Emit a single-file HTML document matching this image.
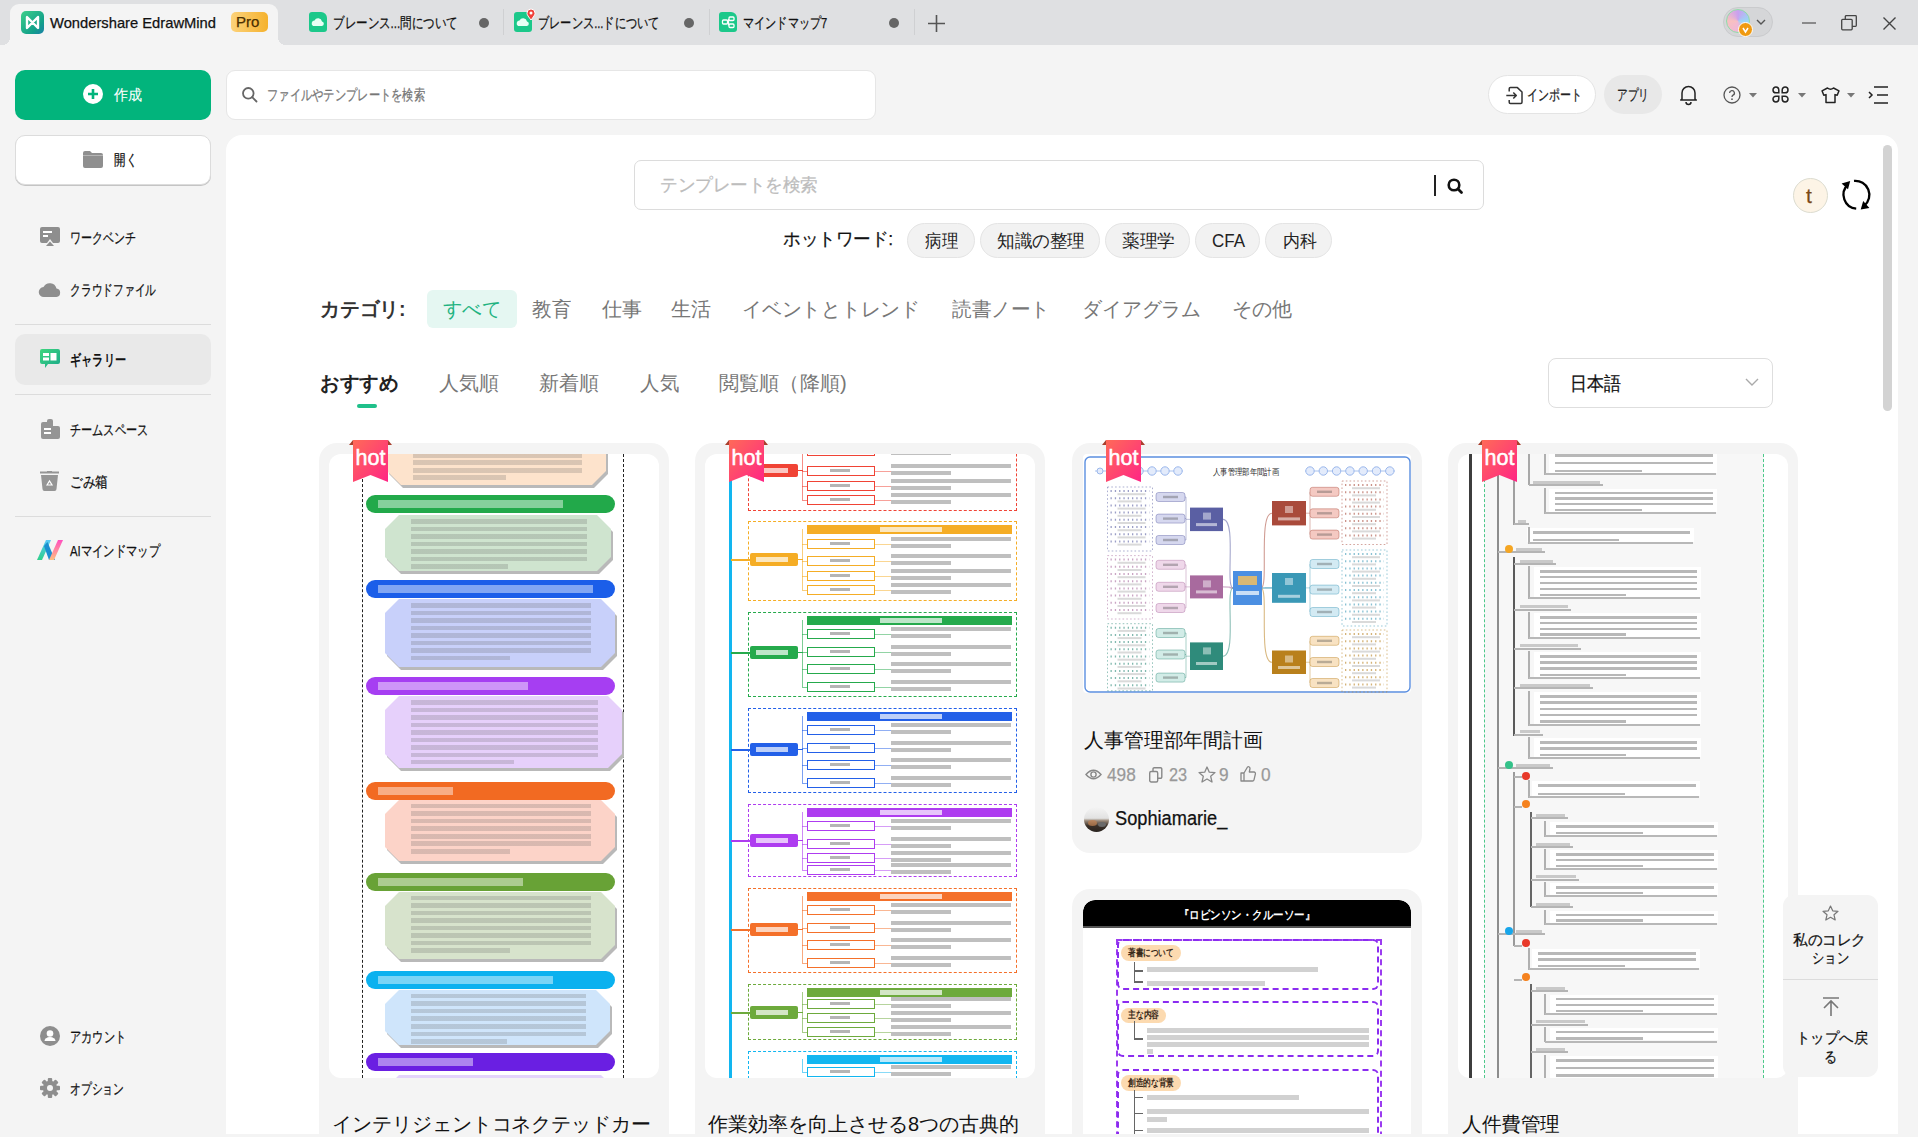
<!DOCTYPE html>
<html><head><meta charset="utf-8">
<style>
*{box-sizing:border-box;margin:0;padding:0}
html,body{width:1918px;height:1137px;overflow:hidden}
body{position:relative;background:#f4f4f4;font-family:"Liberation Sans",sans-serif;color:#1f1f1f}
.a{position:absolute}
.t{position:absolute;white-space:nowrap;line-height:1;-webkit-text-stroke:0.25px currentColor}
svg{position:absolute;overflow:visible}
#titlebar{left:0;top:0;width:1918px;height:45px;background:#dfe0e2}
.tabtxt{font-size:15px;color:#111}
.dot{width:10px;height:10px;border-radius:50%;background:#666}
.sep{width:1px;height:26px;top:9px;background:#cfd0d2}
.nav{left:70px;font-size:15px;color:#111}
.divd{left:15px;width:196px;height:1px;background:#dcdcdc}
#panel{left:226px;top:135px;width:1672px;height:999px;background:#fff;border-radius:16px 16px 0 0}
.chip{top:223px;height:35px;border-radius:18px;background:#f2f2f2;border:1px solid #e4e4e4;font-size:18px;color:#222;line-height:33px;text-align:center}
.cat{top:299px;font-size:20px;color:#777;-webkit-text-stroke:0}
.sort{top:373px;font-size:20px;color:#777;-webkit-text-stroke:0}
.card{background:#f4f4f4;border-radius:18px}
.img{background:#fff;border-radius:12px;overflow:hidden}
.ctitle{font-size:20px;color:#111;-webkit-text-stroke:0}
.t[style*="bold"],.t[style*="font-size:18px"],.t[style*="font-size:19px"],.t[style*="font-size:20px"],.chip .t{-webkit-text-stroke:0}
</style></head>
<body>
<div id="titlebar" class="a"></div>
<!-- active tab -->
<div class="a" style="left:10px;top:4px;width:268px;height:41px;background:#f4f4f4;border-radius:9px 9px 0 0"></div>
<div class="a" style="left:2px;top:37px;width:8px;height:8px;background:radial-gradient(circle at 0 0,#dfe0e2 8px,#f4f4f4 8px)"></div>
<div class="a" style="left:278px;top:37px;width:8px;height:8px;background:radial-gradient(circle at 100% 0,#dfe0e2 8px,#f4f4f4 8px)"></div>
<!-- logo -->
<div class="a" style="left:21px;top:11px;width:23px;height:23px;border-radius:5px;background:linear-gradient(135deg,#3fd08a,#12a08a 70%,#1a7fa8)"></div>
<svg style="left:21px;top:11px" width="23" height="23" viewBox="0 0 23 23"><path d="M6 6 L6 17 L11.5 11.5 L17 17 L17 6 L11.5 11.5 Z" fill="none" stroke="#fff" stroke-width="2.4" stroke-linejoin="round"></path></svg>
<div class="t tabtxt" style="left: 50px; top: 15px; --w: 166px; transform-origin: 0px 0px; transform: scaleX(0.982249);">Wondershare EdrawMind</div>
<div class="a" style="left:231px;top:12px;width:37px;height:20px;border-radius:5px;background:linear-gradient(90deg,#fcd27a,#f5b22e)"></div>
<div class="t" style="left:236px;top:14px;font-size:15px;color:#4a2e00">Pro</div>

<!-- tab 2 -->
<div class="a" style="left:309px;top:12px;width:18px;height:20px;border-radius:3px 6px 3px 3px;background:#1cc88a"></div>
<svg style="left:309px;top:12px" width="18" height="20"><path d="M4 14 a3 3 0 0 1 1.5-5.5 a4 4 0 0 1 7.5 1 a2.3 2.3 0 0 1 0 4.5z" fill="#e8fff5"></path></svg>
<div class="t tabtxt" style="left: 333px; top: 15px; --w: 125px; transform-origin: 0px 0px; transform: scaleX(0.766871);">ブレーンス...問について</div>
<div class="a dot" style="left:479px;top:18px"></div>
<div class="a sep" style="left:503px"></div>
<!-- tab 3 -->
<div class="a" style="left:514px;top:12px;width:18px;height:20px;border-radius:3px 6px 3px 3px;background:#1cc88a"></div>
<svg style="left:514px;top:12px" width="18" height="20"><path d="M4 14 a3 3 0 0 1 1.5-5.5 a4 4 0 0 1 7.5 1 a2.3 2.3 0 0 1 0 4.5z" fill="#e8fff5"></path></svg>
<svg style="left:526px;top:9px" width="10" height="12"><path d="M5 11 C1 6 1 5 1 4 a4 4 0 0 1 8 0 c0 1 0 2 -4 7z" fill="#f0403a" stroke="#fff" stroke-width="1"></path><circle cx="5" cy="4" r="1.5" fill="#fff"></circle></svg>
<div class="t tabtxt" style="left: 538px; top: 15px; --w: 122px; transform-origin: 0px 0px; transform: scaleX(0.748466);">ブレーンス...ドについて</div>
<div class="a dot" style="left:684px;top:18px"></div>
<div class="a sep" style="left:709px"></div>
<!-- tab 4 -->
<div class="a" style="left:719px;top:12px;width:18px;height:20px;border-radius:3px 6px 3px 3px;background:#1cc88a"></div>
<svg style="left:719px;top:12px" width="18" height="20"><g fill="none" stroke="#fff" stroke-width="1.3"><rect x="3.5" y="8" width="5" height="4" rx="1"></rect><rect x="10" y="5" width="5" height="3.5" rx="1"></rect><rect x="10" y="12" width="5" height="3.5" rx="1"></rect><path d="M8.5 10 H9.5 V7 M9.5 10 V13.5"></path></g></svg>
<div class="t tabtxt" style="left: 743px; top: 15px; --w: 84px; transform-origin: 0px 0px; transform: scaleX(0.743363);">マインドマップ7</div>
<div class="a dot" style="left:889px;top:18px"></div>
<div class="a sep" style="left:914px"></div>
<svg style="left:928px;top:15px" width="17" height="17"><path d="M8.5 0 V17 M0 8.5 H17" stroke="#555" stroke-width="1.6"></path></svg>

<!-- window controls -->
<div class="a" style="left:1723px;top:7px;width:50px;height:30px;border-radius:15px;background:#d5d6d8;border:1px solid #cacbcd"></div>
<div class="a" style="left:1726px;top:9px;width:24px;height:24px;border-radius:50%;background:conic-gradient(#c9a0f0,#9ad6f5,#f0b8d8,#f8c0c0,#c9a0f0);border:1px solid #8fdca8"></div>
<div class="a" style="left:1738px;top:22px;width:15px;height:15px;border-radius:50%;background:#f09a10;border:1.5px solid #fff"></div>
<svg style="left:1741px;top:25px" width="9" height="9"><path d="M2 3 L4.5 7 L7 3" fill="none" stroke="#fff" stroke-width="1.5"></path></svg>
<svg style="left:1756px;top:19px" width="10" height="7"><path d="M1 1 L5 5 L9 1" fill="none" stroke="#555" stroke-width="1.4"></path></svg>
<svg style="left:1802px;top:22px" width="15" height="2"><path d="M0 1 H14" stroke="#444" stroke-width="1.1"></path></svg>
<svg style="left:1841px;top:15px" width="16" height="16"><g fill="none" stroke="#444" stroke-width="1.3"><rect x="0.7" y="4.3" width="10.5" height="10.5" rx="1"></rect><path d="M4.3 4.3 V1.5 a1 1 0 0 1 1-0.8 H14.5 a0.8 0.8 0 0 1 0.8 0.8 V10.5 a0.8 0.8 0 0 1 -0.8 0.8 H11.2"></path></g></svg>
<svg style="left:1883px;top:17px" width="13" height="13"><path d="M0.5 0.5 L12.5 12.5 M12.5 0.5 L0.5 12.5" stroke="#444" stroke-width="1.4"></path></svg>

<!-- sidebar -->
<div class="a" style="left:15px;top:70px;width:196px;height:50px;background:#02b47c;border-radius:10px"></div>
<div class="a" style="left:83px;top:84px;width:20px;height:20px;border-radius:50%;background:#fff"></div>
<svg style="left:83px;top:84px" width="20" height="20"><path d="M10 5 V15 M5 10 H15" stroke="#02b47c" stroke-width="2.6"></path></svg>
<div class="t" style="left: 114px; top: 87px; font-size: 15px; color: rgb(255, 255, 255); --w: 28px; -webkit-text-stroke: 0.1px rgb(255, 255, 255); transform-origin: 0px 0px; transform: scaleX(0.933333);">作成</div>

<div class="a" style="left:15px;top:135px;width:196px;height:50px;background:#fff;border:1px solid #dcdcdc;border-radius:10px;box-shadow:0 1px 0 #c4c4c4"></div>
<svg style="left:83px;top:151px" width="20" height="17"><path d="M0 2 a2 2 0 0 1 2-2 H7 L9 2 H18 a2 2 0 0 1 2 2 V15 a2 2 0 0 1 -2 2 H2 a2 2 0 0 1 -2-2z" fill="#8f8f8f"></path><path d="M0 4.5 H20" stroke="#b5b5b5" stroke-width="1"></path></svg>
<div class="t" style="left: 114px; top: 152px; font-size: 15px; color: rgb(17, 17, 17); --w: 23px; transform-origin: 0px 0px; transform: scaleX(0.766667);">開く</div>

<svg style="left:40px;top:227px" width="20" height="20"><path d="M2 0 H18 a2 2 0 0 1 2 2 V14 a2 2 0 0 1 -2 2 H13 L10 12 L7 16 H2 a2 2 0 0 1 -2-2 V2 a2 2 0 0 1 2-2z" fill="#8e8e8e"></path><path d="M6 19 L10 14.5 L14 19z" fill="#8e8e8e"></path><rect x="3" y="4" width="9" height="2" fill="#fff"></rect><rect x="3" y="8" width="5" height="2" fill="#fff"></rect></svg>
<div class="t nav" style="top: 230px; --w: 66px; transform-origin: 0px 0px; transform: scaleX(0.733333);">ワークベンチ</div>
<svg style="left:39px;top:281px" width="22" height="16"><path d="M5 16 a5 5 0 0 1 -0.5-10 a7 7 0 0 1 13 1.5 a4.3 4.3 0 0 1 0 8.5z" fill="#8e8e8e"></path></svg>
<div class="t nav" style="top: 282px; --w: 86px; transform-origin: 0px 0px; transform: scaleX(0.716667);">クラウドファイル</div>
<div class="a divd" style="top:324px"></div>
<div class="a" style="left:15px;top:334px;width:196px;height:51px;background:#e9e9e9;border-radius:10px"></div>
<svg style="left:40px;top:349px" width="20" height="20"><defs><linearGradient id="gg" x1="0" y1="0" x2="1" y2="1"><stop offset="0" stop-color="#3ed67e"></stop><stop offset="1" stop-color="#1aa88a"></stop></linearGradient></defs><path d="M2 0 H18 a2 2 0 0 1 2 2 V13 a2 2 0 0 1 -2 2 H8 L5 19 V15 H2 a2 2 0 0 1 -2-2 V2 a2 2 0 0 1 2-2z" fill="url(#gg)"></path><rect x="3" y="4" width="6" height="3" fill="#fff"></rect><rect x="3" y="8.5" width="6" height="3" fill="#fff"></rect><rect x="10.5" y="4" width="6" height="7.5" fill="#fff"></rect></svg>
<div class="t nav" style="top: 352px; font-weight: bold; --w: 56px; transform-origin: 0px 0px; transform: scaleX(0.746667);">ギャラリー</div>
<div class="a divd" style="top:394px"></div>
<svg style="left:40px;top:419px" width="20" height="20"><path d="M1 5 a2 2 0 0 1 2-2 H7 V2 a2 2 0 0 1 2-2 H11 a2 2 0 0 1 2 2 V7 H18 a2 2 0 0 1 2 2 V18 a2 2 0 0 1 -2 2 H3 a2 2 0 0 1 -2-2z" fill="#959595"></path><rect x="4" y="9" width="7" height="2" fill="#fff"></rect><rect x="4" y="13" width="7" height="2" fill="#fff"></rect></svg>
<div class="t nav" style="top: 422px; --w: 78px; transform-origin: 0px 0px; transform: scaleX(0.742857);">チームスペース</div>
<svg style="left:40px;top:471px" width="20" height="20"><rect x="0" y="0.5" width="19" height="2" fill="#959595"></rect><rect x="7" y="0" width="5" height="1" fill="#959595"></rect><path d="M1 4 H18 L16.5 18 a2 2 0 0 1 -2 2 H4.5 a2 2 0 0 1 -2-2z" fill="#959595"></path><path d="M7 14 L9.5 10 L12 14z" fill="none" stroke="#fff" stroke-width="1.2"></path></svg>
<div class="t nav" style="top: 474px; --w: 38px; transform-origin: 0px 0px; transform: scaleX(0.844444);">ごみ箱</div>
<div class="a divd" style="top:516px"></div>
<svg style="left:37px;top:540px" width="26" height="20"><defs><linearGradient id="ai1" x1="0" y1="1" x2="0" y2="0"><stop offset="0" stop-color="#2fd08a"></stop><stop offset="1" stop-color="#5ac8f8"></stop></linearGradient><linearGradient id="ai2" x1="0" y1="1" x2="0" y2="0"><stop offset="0" stop-color="#ffc080"></stop><stop offset="1" stop-color="#ff4fc0"></stop></linearGradient></defs><path d="M0 20 L9 0 H14 L5 20z" fill="url(#ai1)"></path><path d="M7 6 L12 20 H18 L10.5 2z" fill="#1b8fd0"></path><path d="M12 20 L21 0 H26 L17 20z" fill="url(#ai2)"></path></svg>
<div class="t nav" style="top: 543px; --w: 90px; transform-origin: 0px 0px; transform: scaleX(0.756303);">AIマインドマップ</div>

<svg style="left:40px;top:1026px" width="20" height="20"><circle cx="10" cy="10" r="10" fill="#8e8e8e"></circle><circle cx="10" cy="7.5" r="3.3" fill="#fff"></circle><path d="M4.5 15 a5.5 4 0 0 1 11 0z" fill="#fff"></path></svg>
<div class="t nav" style="top: 1029px; --w: 56px; transform-origin: 0px 0px; transform: scaleX(0.746667);">アカウント</div>
<svg style="left:40px;top:1078px" width="20" height="20" viewBox="-10 -10 20 20"><g fill="#8e8e8e"><circle r="7.2"></circle><rect x="-2.2" y="-10" width="4.4" height="5" rx="1" transform="rotate(0)"></rect><rect x="-2.2" y="-10" width="4.4" height="5" rx="1" transform="rotate(45)"></rect><rect x="-2.2" y="-10" width="4.4" height="5" rx="1" transform="rotate(90)"></rect><rect x="-2.2" y="-10" width="4.4" height="5" rx="1" transform="rotate(135)"></rect><rect x="-2.2" y="-10" width="4.4" height="5" rx="1" transform="rotate(180)"></rect><rect x="-2.2" y="-10" width="4.4" height="5" rx="1" transform="rotate(225)"></rect><rect x="-2.2" y="-10" width="4.4" height="5" rx="1" transform="rotate(270)"></rect><rect x="-2.2" y="-10" width="4.4" height="5" rx="1" transform="rotate(315)"></rect></g><circle r="3" fill="#f4f4f4"></circle></svg>
<div class="t nav" style="top: 1081px; --w: 54px; transform-origin: 0px 0px; transform: scaleX(0.72);">オプション</div>

<!-- top search -->
<div class="a" style="left:226px;top:70px;width:650px;height:50px;background:#fff;border:1px solid #e6e6e6;border-radius:9px"></div>
<svg style="left:242px;top:87px" width="16" height="16"><circle cx="6.3" cy="6.3" r="5.3" fill="none" stroke="#666" stroke-width="1.8"></circle><path d="M10.2 10.2 L14.5 14.5" stroke="#666" stroke-width="1.8" stroke-linecap="round"></path></svg>
<div class="t" style="left: 267px; top: 87px; font-size: 15px; color: rgb(119, 119, 119); --w: 158px; transform-origin: 0px 0px; transform: scaleX(0.752381);">ファイルやテンプレートを検索</div>

<!-- right toolbar -->
<div class="a" style="left:1488px;top:75px;width:108px;height:39px;border-radius:20px;background:#fff;border:1px solid #e4e4e4"></div>
<svg style="left:1506px;top:87px" width="17" height="17"><g fill="none" stroke="#333" stroke-width="1.5" stroke-linejoin="round"><path d="M3.2 4.4 V1.8 a1.2 1.2 0 0 1 1.2-1.2 H11.4 L16 5 V15.3 a1.2 1.2 0 0 1 -1.2 1.2 H4.4 a1.2 1.2 0 0 1 -1.2-1.2 V12.9"></path><path d="M0.3 8.5 H10.3 M7.3 5.5 L10.3 8.5 L7.3 11.5"></path></g></svg>
<div class="t" style="left: 1527px; top: 87px; font-size: 15px; color: rgb(34, 34, 34); --w: 55px; transform-origin: 0px 0px; transform: scaleX(0.733333);">インポート</div>
<div class="a" style="left:1604px;top:75px;width:58px;height:39px;border-radius:20px;background:#e8e8e8"></div>
<div class="t" style="left: 1617px; top: 87px; font-size: 15px; color: rgb(34, 34, 34); --w: 32px; transform-origin: 0px 0px; transform: scaleX(0.711111);">アプリ</div>
<svg style="left:1680px;top:85px" width="17" height="19"><g fill="none" stroke="#222" stroke-width="1.5"><path d="M2 14 V8 a6.5 6.5 0 0 1 13 0 V14 L16.3 15 H0.7z" stroke-linejoin="round"></path><path d="M6 17 a2.5 2.5 0 0 0 5 0"></path></g></svg>
<svg style="left:1723px;top:86px" width="18" height="18"><circle cx="9" cy="9" r="8" fill="none" stroke="#555" stroke-width="1.3"></circle><path d="M6.6 7 a2.4 2.4 0 1 1 3.4 2.2 c-0.8 0.4 -1 0.9 -1 1.8" fill="none" stroke="#555" stroke-width="1.3"></path><circle cx="9" cy="13.2" r="0.85" fill="#555"></circle></svg>
<svg style="left:1749px;top:93px" width="8" height="5"><path d="M0 0 H8 L4 4.5z" fill="#777"></path></svg>
<svg style="left:1772px;top:86px" width="17" height="17"><g fill="none" stroke="#222" stroke-width="1.5"><path d="M6.8 6.8 H3.9 a2.9 2.9 0 1 1 2.9-2.9z"></path><path d="M10.2 6.8 H13.1 a2.9 2.9 0 1 0 -2.9-2.9z"></path><path d="M6.8 10.2 H3.9 a2.9 2.9 0 1 0 2.9 2.9z"></path><path d="M10.2 10.2 H13.1 a2.9 2.9 0 1 1 -2.9 2.9z"></path></g></svg>
<svg style="left:1798px;top:93px" width="8" height="5"><path d="M0 0 H8 L4 4.5z" fill="#777"></path></svg>
<svg style="left:1821px;top:87px" width="19" height="17"><path d="M6.5 1 Q9.5 3.5 12.5 1 L18 3.8 L16.2 8.3 L14 7.6 V15.5 H5 V7.6 L2.8 8.3 L1 3.8z" fill="none" stroke="#222" stroke-width="1.5" stroke-linejoin="round"></path></svg>
<svg style="left:1847px;top:93px" width="8" height="5"><path d="M0 0 H8 L4 4.5z" fill="#777"></path></svg>
<svg style="left:1868px;top:86px" width="21" height="18"><g fill="none" stroke="#222" stroke-width="1.5"><path d="M6 1 H20 M9 9 H20 M6 17 H20"></path><path d="M1 6 L4 9 L1 12"></path></g></svg>

<div id="panel" class="a"></div>

<!-- panel header -->
<div class="a" style="left:634px;top:160px;width:850px;height:50px;border:1px solid #dcdcdc;border-radius:7px;background:#fff"></div>
<div class="t" style="left: 660px; top: 176px; font-size: 18px; color: rgb(189, 189, 189); --w: 158px; transform-origin: 0px 0px; transform: scaleX(0.975309);">テンプレートを検索</div>
<div class="a" style="left:1434px;top:175px;width:2px;height:21px;background:#222"></div>
<svg style="left:1447px;top:178px" width="17" height="16"><circle cx="7" cy="7" r="5.3" fill="none" stroke="#111" stroke-width="2.6"></circle><path d="M11 11 L14.5 14.5" stroke="#111" stroke-width="2.8" stroke-linecap="round"></path></svg>
<div class="t" style="left: 783px; top: 230px; font-size: 18px; color: rgb(17, 17, 17); --w: 110px; transform-origin: 0px 0px; transform: scaleX(0.973451);">ホットワード:</div>
<div class="a chip" style="left:907px;width:68px"><span class="t" style="left: 17px; top: 8px; --w: 33px; transform-origin: 0px 0px; transform: scaleX(0.916667);">病理</span></div>
<div class="a chip" style="left:980px;width:120px"><span class="t" style="left: 16px; top: 8px; --w: 88px; transform-origin: 0px 0px; transform: scaleX(0.977778);">知識の整理</span></div>
<div class="a chip" style="left:1105px;width:85px"><span class="t" style="left: 16px; top: 8px; --w: 53px; transform-origin: 0px 0px; transform: scaleX(0.981481);">薬理学</span></div>
<div class="a chip" style="left:1195px;width:65px"><span class="t" style="left: 16px; top: 8px; --w: 33px; transform-origin: 0px 0px; transform: scaleX(0.942857);">CFA</span></div>
<div class="a chip" style="left:1265px;width:67px"><span class="t" style="left: 17px; top: 8px; --w: 34px; transform-origin: 0px 0px; transform: scaleX(0.944444);">内科</span></div>

<div class="a" style="left:1793px;top:178px;width:35px;height:35px;border-radius:50%;background:#fdf4e6;border:1px solid #dcdcd0"></div>
<div class="t" style="left:1806px;top:185px;font-size:21px;color:#7a4816">t</div>
<svg style="left:1841px;top:180px" width="30" height="30"><g fill="none" stroke="#000" stroke-width="2.3"><path d="M6.8 4.6 A14 14 0 0 0 15.2 28.6"></path><path d="M13 0.9 A14 14 0 0 1 23.3 25.6"></path></g><path d="M0.6 3.5 L9.2 0.9 L7 9.3z M19.7 29.4 L28.4 27.9 L22.2 21z" fill="#000"></path></svg>

<div class="t" style="left: 320px; top: 299px; font-size: 20px; color: rgb(51, 51, 51); font-weight: bold; --w: 86px; transform-origin: 0px 0px; transform: scaleX(0.988506);">カテゴリ:</div>
<div class="a" style="left:427px;top:290px;width:90px;height:38px;border-radius:6px;background:#e5f7f2"></div>
<div class="t cat" style="left: 443px; color: rgb(31, 179, 129); --w: 58px; transform-origin: 0px 0px; transform: scaleX(0.966667);">すべて</div>
<div class="t cat" style="left: 532px; --w: 39px; transform-origin: 0px 0px; transform: scaleX(0.975);">教育</div>
<div class="t cat" style="left: 602px; --w: 40px; transform-origin: 0px 0px; transform: scaleX(1);">仕事</div>
<div class="t cat" style="left: 671px; --w: 40px; transform-origin: 0px 0px; transform: scaleX(1);">生活</div>
<div class="t cat" style="left: 742px; --w: 178px; transform-origin: 0px 0px; transform: scaleX(0.988889);">イベントとトレンド</div>
<div class="t cat" style="left: 952px; --w: 98px; transform-origin: 0px 0px; transform: scaleX(0.98);">読書ノート</div>
<div class="t cat" style="left: 1082px; --w: 119px; transform-origin: 0px 0px; transform: scaleX(0.991667);">ダイアグラム</div>
<div class="t cat" style="left: 1232px; --w: 60px; transform-origin: 0px 0px; transform: scaleX(1);">その他</div>

<div class="t sort" style="left: 320px; color: rgb(34, 34, 34); font-weight: bold; --w: 78px; transform-origin: 0px 0px; transform: scaleX(0.975);">おすすめ</div>
<div class="a" style="left:357px;top:404px;width:20px;height:4px;border-radius:2px;background:#1fc08a"></div>
<div class="t sort" style="left: 439px; --w: 60px; transform-origin: 0px 0px; transform: scaleX(1);">人気順</div>
<div class="t sort" style="left: 539px; --w: 60px; transform-origin: 0px 0px; transform: scaleX(1);">新着順</div>
<div class="t sort" style="left: 640px; --w: 39px; transform-origin: 0px 0px; transform: scaleX(0.975);">人気</div>
<div class="t sort" style="left: 719px; --w: 128px; transform-origin: 0px 0px; transform: scaleX(1.00787);">閲覧順（降順)</div>

<div class="a" style="left:1548px;top:358px;width:225px;height:50px;border:1px solid #dedede;border-radius:8px;background:#fff"></div>
<div class="t" style="left: 1570px; top: 374px; font-size: 19px; color: rgb(17, 17, 17); --w: 51px; transform-origin: 0px 0px; transform: scaleX(0.894737);">日本語</div>
<svg style="left:1745px;top:378px" width="14" height="9"><path d="M1 1 L7 7 L13 1" fill="none" stroke="#aaa" stroke-width="1.4"></path></svg>

<!--CARDS-->
<div class="a card" style="left:319px;top:443px;width:350px;height:717px"></div>
<div class="a img" style="left:329px;top:454px;width:330px;height:624px"><div class="a" style="left:33px;top:0;width:0;height:624px;border-left:1px dashed #222"></div><div class="a" style="left:294px;top:0;width:0;height:624px;border-left:1px dashed #222"></div><div class="a" style="left:60px;top:-17px;width:219px;height:51px;background:#b9b9b9;clip-path:polygon(14px 0,calc(100% - 14px) 0,100% 14px,100% calc(100% - 14px),calc(100% - 14px) 100%,14px 100%,0 calc(100% - 14px),0 14px)"></div><div class="a" style="left:58px;top:-20px;width:219px;height:51px;background:#fde3cc;clip-path:polygon(14px 0,calc(100% - 14px) 0,100% 14px,100% calc(100% - 14px),calc(100% - 14px) 100%,14px 100%,0 calc(100% - 14px),0 14px);--bgc:#fde3cc"><div class="a" style="left:26px;top:4px;width:169px;height:42.0px;background:repeating-linear-gradient(180deg,rgba(90,90,90,.22) 0 4.5px,transparent 4.5px 7.5px)"></div><div class="a" style="left:119.0px;top:41.0px;width:77.0px;height:5.5px;background:var(--bgc)"></div></div><div class="a" style="left:37px;top:41px;width:249px;height:18px;border-radius:9px;background:#22a94a"></div><div class="a" style="left:49px;top:46px;width:185px;height:8px;background:rgba(255,255,255,.45)"></div><div class="a" style="left:58px;top:64px;width:226px;height:56px;background:#b9b9b9;clip-path:polygon(14px 0,calc(100% - 14px) 0,100% 14px,100% calc(100% - 14px),calc(100% - 14px) 100%,14px 100%,0 calc(100% - 14px),0 14px)"></div><div class="a" style="left:56px;top:61px;width:226px;height:56px;background:#cfe4cf;clip-path:polygon(14px 0,calc(100% - 14px) 0,100% 14px,100% calc(100% - 14px),calc(100% - 14px) 100%,14px 100%,0 calc(100% - 14px),0 14px);--bgc:#cfe4cf"><div class="a" style="left:26px;top:4px;width:176px;height:49.5px;background:repeating-linear-gradient(180deg,rgba(90,90,90,.22) 0 4.5px,transparent 4.5px 7.5px)"></div><div class="a" style="left:122.8px;top:48.5px;width:80.2px;height:5.5px;background:var(--bgc)"></div></div><div class="a" style="left:37px;top:126px;width:249px;height:18px;border-radius:9px;background:#1b5ee9"></div><div class="a" style="left:49px;top:131px;width:215px;height:8px;background:rgba(255,255,255,.45)"></div><div class="a" style="left:58px;top:148px;width:230px;height:68px;background:#b9b9b9;clip-path:polygon(14px 0,calc(100% - 14px) 0,100% 14px,100% calc(100% - 14px),calc(100% - 14px) 100%,14px 100%,0 calc(100% - 14px),0 14px)"></div><div class="a" style="left:56px;top:145px;width:230px;height:68px;background:#c8d0fa;clip-path:polygon(14px 0,calc(100% - 14px) 0,100% 14px,100% calc(100% - 14px),calc(100% - 14px) 100%,14px 100%,0 calc(100% - 14px),0 14px);--bgc:#c8d0fa"><div class="a" style="left:26px;top:4px;width:180px;height:57.0px;background:repeating-linear-gradient(180deg,rgba(90,90,90,.22) 0 4.5px,transparent 4.5px 7.5px)"></div><div class="a" style="left:125.0px;top:56.0px;width:82.0px;height:5.5px;background:var(--bgc)"></div></div><div class="a" style="left:37px;top:223px;width:249px;height:18px;border-radius:9px;background:#a63ef2"></div><div class="a" style="left:49px;top:228px;width:150px;height:8px;background:rgba(255,255,255,.45)"></div><div class="a" style="left:58px;top:245px;width:237px;height:72px;background:#b9b9b9;clip-path:polygon(14px 0,calc(100% - 14px) 0,100% 14px,100% calc(100% - 14px),calc(100% - 14px) 100%,14px 100%,0 calc(100% - 14px),0 14px)"></div><div class="a" style="left:56px;top:242px;width:237px;height:72px;background:#e6d0fb;clip-path:polygon(14px 0,calc(100% - 14px) 0,100% 14px,100% calc(100% - 14px),calc(100% - 14px) 100%,14px 100%,0 calc(100% - 14px),0 14px);--bgc:#e6d0fb"><div class="a" style="left:26px;top:4px;width:187px;height:64.5px;background:repeating-linear-gradient(180deg,rgba(90,90,90,.22) 0 4.5px,transparent 4.5px 7.5px)"></div><div class="a" style="left:128.9px;top:63.5px;width:85.1px;height:5.5px;background:var(--bgc)"></div></div><div class="a" style="left:37px;top:328px;width:249px;height:18px;border-radius:9px;background:#f26a22"></div><div class="a" style="left:49px;top:333px;width:75px;height:8px;background:rgba(255,255,255,.45)"></div><div class="a" style="left:58px;top:349px;width:230px;height:61px;background:#b9b9b9;clip-path:polygon(14px 0,calc(100% - 14px) 0,100% 14px,100% calc(100% - 14px),calc(100% - 14px) 100%,14px 100%,0 calc(100% - 14px),0 14px)"></div><div class="a" style="left:56px;top:346px;width:230px;height:61px;background:#fcd3c8;clip-path:polygon(14px 0,calc(100% - 14px) 0,100% 14px,100% calc(100% - 14px),calc(100% - 14px) 100%,14px 100%,0 calc(100% - 14px),0 14px);--bgc:#fcd3c8"><div class="a" style="left:26px;top:4px;width:180px;height:49.5px;background:repeating-linear-gradient(180deg,rgba(90,90,90,.22) 0 4.5px,transparent 4.5px 7.5px)"></div><div class="a" style="left:125.0px;top:48.5px;width:82.0px;height:5.5px;background:var(--bgc)"></div></div><div class="a" style="left:37px;top:419px;width:249px;height:18px;border-radius:9px;background:#68a236"></div><div class="a" style="left:49px;top:424px;width:145px;height:8px;background:rgba(255,255,255,.45)"></div><div class="a" style="left:58px;top:441px;width:230px;height:67px;background:#b9b9b9;clip-path:polygon(14px 0,calc(100% - 14px) 0,100% 14px,100% calc(100% - 14px),calc(100% - 14px) 100%,14px 100%,0 calc(100% - 14px),0 14px)"></div><div class="a" style="left:56px;top:438px;width:230px;height:67px;background:#d7e3cc;clip-path:polygon(14px 0,calc(100% - 14px) 0,100% 14px,100% calc(100% - 14px),calc(100% - 14px) 100%,14px 100%,0 calc(100% - 14px),0 14px);--bgc:#d7e3cc"><div class="a" style="left:26px;top:4px;width:180px;height:57.0px;background:repeating-linear-gradient(180deg,rgba(90,90,90,.22) 0 4.5px,transparent 4.5px 7.5px)"></div><div class="a" style="left:125.0px;top:56.0px;width:82.0px;height:5.5px;background:var(--bgc)"></div></div><div class="a" style="left:37px;top:517px;width:249px;height:18px;border-radius:9px;background:#0bb1ef"></div><div class="a" style="left:49px;top:522px;width:175px;height:8px;background:rgba(255,255,255,.45)"></div><div class="a" style="left:58px;top:539px;width:225px;height:55px;background:#b9b9b9;clip-path:polygon(14px 0,calc(100% - 14px) 0,100% 14px,100% calc(100% - 14px),calc(100% - 14px) 100%,14px 100%,0 calc(100% - 14px),0 14px)"></div><div class="a" style="left:56px;top:536px;width:225px;height:55px;background:#cfe5fb;clip-path:polygon(14px 0,calc(100% - 14px) 0,100% 14px,100% calc(100% - 14px),calc(100% - 14px) 100%,14px 100%,0 calc(100% - 14px),0 14px);--bgc:#cfe5fb"><div class="a" style="left:26px;top:4px;width:175px;height:49.5px;background:repeating-linear-gradient(180deg,rgba(90,90,90,.22) 0 4.5px,transparent 4.5px 7.5px)"></div><div class="a" style="left:122.3px;top:48.5px;width:79.7px;height:5.5px;background:var(--bgc)"></div></div><div class="a" style="left:37px;top:599px;width:249px;height:18px;border-radius:9px;background:#6a1fe2"></div><div class="a" style="left:49px;top:604px;width:95px;height:8px;background:rgba(255,255,255,.45)"></div><div class="a" style="left:58px;top:624px;width:230px;height:60px;background:#b9b9b9;clip-path:polygon(14px 0,calc(100% - 14px) 0,100% 14px,100% calc(100% - 14px),calc(100% - 14px) 100%,14px 100%,0 calc(100% - 14px),0 14px)"></div><div class="a" style="left:56px;top:621px;width:230px;height:60px;background:#e3d3fb;clip-path:polygon(14px 0,calc(100% - 14px) 0,100% 14px,100% calc(100% - 14px),calc(100% - 14px) 100%,14px 100%,0 calc(100% - 14px),0 14px);--bgc:#e3d3fb"><div class="a" style="left:26px;top:4px;width:180px;height:49.5px;background:repeating-linear-gradient(180deg,rgba(90,90,90,.22) 0 4.5px,transparent 4.5px 7.5px)"></div><div class="a" style="left:125.0px;top:48.5px;width:82.0px;height:5.5px;background:var(--bgc)"></div></div></div>
<div class="t ctitle" style="left: 332px; top: 1114px; --w: 319px; transform-origin: 0px 0px; transform: scaleX(0.996875);">インテリジェントコネクテッドカー</div>
<svg style="left:349px;top:440px" width="43" height="42"><defs><linearGradient id="hg353" x1="0" y1="0" x2="1" y2="1"><stop offset="0" stop-color="#ff6a58"></stop><stop offset="1" stop-color="#ff2585"></stop></linearGradient></defs><path d="M0 5 L4 0 V5z M39 0 L43 5 H39z" fill="#a8402e"></path><path d="M4 0 H39 V42 L21.5 35 L4 42z" fill="url(#hg353)"></path><text x="21.5" y="24.5" font-size="21.5" fill="#fff" stroke="#fff" stroke-width=".5" text-anchor="middle" font-family="Liberation Sans">hot</text></svg>
<div class="a card" style="left:695px;top:443px;width:350px;height:717px"></div>
<div class="a img" style="left:705px;top:454px;width:330px;height:624px"><div class="a" style="left:24px;top:0;width:3px;height:624px;background:#12b6f0"></div><div class="a" style="left:43px;top:-40px;width:269px;height:97px;border:1px dashed #f04335"></div><div class="a" style="left:26px;top:16px;width:20px;height:1.5px;background:#f04335"></div><div class="a" style="left:45px;top:10px;width:48px;height:13px;border-radius:2px;background:#f04335"></div><div class="a" style="left:51px;top:14px;width:32px;height:5px;background:rgba(255,255,255,.7)"></div><div class="a" style="left:93px;top:16px;width:5px;height:1px;background:#f04335"></div><div class="a" style="left:97px;top:-3px;width:1px;height:49px;background:#f04335;opacity:.6"></div><div class="a" style="left:97px;top:-3px;width:5px;height:1px;background:#f04335;opacity:.6"></div><div class="a" style="left:102px;top:-8px;width:68px;height:10px;border:1.3px solid #f04335;background:#fff"></div><div class="a" style="left:125px;top:-5px;width:20px;height:3px;background:rgba(90,90,90,.45)"></div><div class="a" style="left:170px;top:-3px;width:16px;height:1px;background:#f04335;opacity:.5"></div><div class="a" style="left:186px;top:-10px;width:120px;height:3.5px;background:rgba(60,60,60,.33)"></div><div class="a" style="left:186px;top:-3px;width:60px;height:3.5px;background:rgba(60,60,60,.33)"></div><div class="a" style="left:97px;top:17px;width:5px;height:1px;background:#f04335;opacity:.6"></div><div class="a" style="left:102px;top:12px;width:68px;height:10px;border:1.3px solid #f04335;background:#fff"></div><div class="a" style="left:125px;top:15px;width:20px;height:3px;background:rgba(90,90,90,.45)"></div><div class="a" style="left:170px;top:17px;width:16px;height:1px;background:#f04335;opacity:.5"></div><div class="a" style="left:186px;top:10px;width:120px;height:3.5px;background:rgba(60,60,60,.33)"></div><div class="a" style="left:186px;top:17px;width:60px;height:3.5px;background:rgba(60,60,60,.33)"></div><div class="a" style="left:97px;top:32px;width:5px;height:1px;background:#f04335;opacity:.6"></div><div class="a" style="left:102px;top:27px;width:68px;height:10px;border:1.3px solid #f04335;background:#fff"></div><div class="a" style="left:125px;top:30px;width:20px;height:3px;background:rgba(90,90,90,.45)"></div><div class="a" style="left:170px;top:32px;width:16px;height:1px;background:#f04335;opacity:.5"></div><div class="a" style="left:186px;top:25px;width:120px;height:3.5px;background:rgba(60,60,60,.33)"></div><div class="a" style="left:186px;top:32px;width:60px;height:3.5px;background:rgba(60,60,60,.33)"></div><div class="a" style="left:97px;top:46px;width:5px;height:1px;background:#f04335;opacity:.6"></div><div class="a" style="left:102px;top:41px;width:68px;height:10px;border:1.3px solid #f04335;background:#fff"></div><div class="a" style="left:125px;top:44px;width:20px;height:3px;background:rgba(90,90,90,.45)"></div><div class="a" style="left:170px;top:46px;width:16px;height:1px;background:#f04335;opacity:.5"></div><div class="a" style="left:186px;top:39px;width:120px;height:3.5px;background:rgba(60,60,60,.33)"></div><div class="a" style="left:186px;top:46px;width:60px;height:3.5px;background:rgba(60,60,60,.33)"></div><div class="a" style="left:43px;top:67px;width:269px;height:80px;border:1px dashed #f5ad25"></div><div class="a" style="left:26px;top:105px;width:20px;height:1.5px;background:#f5ad25"></div><div class="a" style="left:45px;top:99px;width:48px;height:13px;border-radius:2px;background:#f5ad25"></div><div class="a" style="left:51px;top:103px;width:32px;height:5px;background:rgba(255,255,255,.7)"></div><div class="a" style="left:102px;top:71px;width:205px;height:9px;background:#f5ad25"></div><div class="a" style="left:175px;top:72.5px;width:62px;height:5px;background:rgba(255,255,255,.7)"></div><div class="a" style="left:93px;top:105px;width:5px;height:1px;background:#f5ad25"></div><div class="a" style="left:97px;top:75px;width:1px;height:61px;background:#f5ad25;opacity:.6"></div><div class="a" style="left:97px;top:90px;width:5px;height:1px;background:#f5ad25;opacity:.6"></div><div class="a" style="left:102px;top:85px;width:68px;height:10px;border:1.3px solid #f5ad25;background:#fff"></div><div class="a" style="left:125px;top:88px;width:20px;height:3px;background:rgba(90,90,90,.45)"></div><div class="a" style="left:170px;top:90px;width:16px;height:1px;background:#f5ad25;opacity:.5"></div><div class="a" style="left:186px;top:83px;width:120px;height:3.5px;background:rgba(60,60,60,.33)"></div><div class="a" style="left:186px;top:90px;width:60px;height:3.5px;background:rgba(60,60,60,.33)"></div><div class="a" style="left:97px;top:107px;width:5px;height:1px;background:#f5ad25;opacity:.6"></div><div class="a" style="left:102px;top:102px;width:68px;height:10px;border:1.3px solid #f5ad25;background:#fff"></div><div class="a" style="left:125px;top:105px;width:20px;height:3px;background:rgba(90,90,90,.45)"></div><div class="a" style="left:170px;top:107px;width:16px;height:1px;background:#f5ad25;opacity:.5"></div><div class="a" style="left:186px;top:100px;width:120px;height:3.5px;background:rgba(60,60,60,.33)"></div><div class="a" style="left:186px;top:107px;width:60px;height:3.5px;background:rgba(60,60,60,.33)"></div><div class="a" style="left:97px;top:122px;width:5px;height:1px;background:#f5ad25;opacity:.6"></div><div class="a" style="left:102px;top:117px;width:68px;height:10px;border:1.3px solid #f5ad25;background:#fff"></div><div class="a" style="left:125px;top:120px;width:20px;height:3px;background:rgba(90,90,90,.45)"></div><div class="a" style="left:170px;top:122px;width:16px;height:1px;background:#f5ad25;opacity:.5"></div><div class="a" style="left:186px;top:115px;width:120px;height:3.5px;background:rgba(60,60,60,.33)"></div><div class="a" style="left:186px;top:122px;width:60px;height:3.5px;background:rgba(60,60,60,.33)"></div><div class="a" style="left:97px;top:136px;width:5px;height:1px;background:#f5ad25;opacity:.6"></div><div class="a" style="left:102px;top:131px;width:68px;height:10px;border:1.3px solid #f5ad25;background:#fff"></div><div class="a" style="left:125px;top:134px;width:20px;height:3px;background:rgba(90,90,90,.45)"></div><div class="a" style="left:170px;top:136px;width:16px;height:1px;background:#f5ad25;opacity:.5"></div><div class="a" style="left:186px;top:129px;width:120px;height:3.5px;background:rgba(60,60,60,.33)"></div><div class="a" style="left:186px;top:136px;width:60px;height:3.5px;background:rgba(60,60,60,.33)"></div><div class="a" style="left:43px;top:158px;width:269px;height:85px;border:1px dashed #25aa4c"></div><div class="a" style="left:26px;top:198px;width:20px;height:1.5px;background:#25aa4c"></div><div class="a" style="left:45px;top:192px;width:48px;height:13px;border-radius:2px;background:#25aa4c"></div><div class="a" style="left:51px;top:196px;width:32px;height:5px;background:rgba(255,255,255,.7)"></div><div class="a" style="left:102px;top:162px;width:205px;height:9px;background:#25aa4c"></div><div class="a" style="left:175px;top:163.5px;width:62px;height:5px;background:rgba(255,255,255,.7)"></div><div class="a" style="left:93px;top:198px;width:5px;height:1px;background:#25aa4c"></div><div class="a" style="left:97px;top:166px;width:1px;height:67px;background:#25aa4c;opacity:.6"></div><div class="a" style="left:97px;top:180px;width:5px;height:1px;background:#25aa4c;opacity:.6"></div><div class="a" style="left:102px;top:175px;width:68px;height:10px;border:1.3px solid #25aa4c;background:#fff"></div><div class="a" style="left:125px;top:178px;width:20px;height:3px;background:rgba(90,90,90,.45)"></div><div class="a" style="left:170px;top:180px;width:16px;height:1px;background:#25aa4c;opacity:.5"></div><div class="a" style="left:186px;top:173px;width:120px;height:3.5px;background:rgba(60,60,60,.33)"></div><div class="a" style="left:186px;top:180px;width:60px;height:3.5px;background:rgba(60,60,60,.33)"></div><div class="a" style="left:97px;top:198px;width:5px;height:1px;background:#25aa4c;opacity:.6"></div><div class="a" style="left:102px;top:193px;width:68px;height:10px;border:1.3px solid #25aa4c;background:#fff"></div><div class="a" style="left:125px;top:196px;width:20px;height:3px;background:rgba(90,90,90,.45)"></div><div class="a" style="left:170px;top:198px;width:16px;height:1px;background:#25aa4c;opacity:.5"></div><div class="a" style="left:186px;top:191px;width:120px;height:3.5px;background:rgba(60,60,60,.33)"></div><div class="a" style="left:186px;top:198px;width:60px;height:3.5px;background:rgba(60,60,60,.33)"></div><div class="a" style="left:97px;top:215px;width:5px;height:1px;background:#25aa4c;opacity:.6"></div><div class="a" style="left:102px;top:210px;width:68px;height:10px;border:1.3px solid #25aa4c;background:#fff"></div><div class="a" style="left:125px;top:213px;width:20px;height:3px;background:rgba(90,90,90,.45)"></div><div class="a" style="left:170px;top:215px;width:16px;height:1px;background:#25aa4c;opacity:.5"></div><div class="a" style="left:186px;top:208px;width:120px;height:3.5px;background:rgba(60,60,60,.33)"></div><div class="a" style="left:186px;top:215px;width:60px;height:3.5px;background:rgba(60,60,60,.33)"></div><div class="a" style="left:97px;top:233px;width:5px;height:1px;background:#25aa4c;opacity:.6"></div><div class="a" style="left:102px;top:228px;width:68px;height:10px;border:1.3px solid #25aa4c;background:#fff"></div><div class="a" style="left:125px;top:231px;width:20px;height:3px;background:rgba(90,90,90,.45)"></div><div class="a" style="left:170px;top:233px;width:16px;height:1px;background:#25aa4c;opacity:.5"></div><div class="a" style="left:186px;top:226px;width:120px;height:3.5px;background:rgba(60,60,60,.33)"></div><div class="a" style="left:186px;top:233px;width:60px;height:3.5px;background:rgba(60,60,60,.33)"></div><div class="a" style="left:43px;top:254px;width:269px;height:85px;border:1px dashed #2360e8"></div><div class="a" style="left:26px;top:295px;width:20px;height:1.5px;background:#2360e8"></div><div class="a" style="left:45px;top:289px;width:48px;height:13px;border-radius:2px;background:#2360e8"></div><div class="a" style="left:51px;top:293px;width:32px;height:5px;background:rgba(255,255,255,.7)"></div><div class="a" style="left:102px;top:258px;width:205px;height:9px;background:#2360e8"></div><div class="a" style="left:175px;top:259.5px;width:62px;height:5px;background:rgba(255,255,255,.7)"></div><div class="a" style="left:93px;top:295px;width:5px;height:1px;background:#2360e8"></div><div class="a" style="left:97px;top:262px;width:1px;height:67px;background:#2360e8;opacity:.6"></div><div class="a" style="left:97px;top:276px;width:5px;height:1px;background:#2360e8;opacity:.6"></div><div class="a" style="left:102px;top:271px;width:68px;height:10px;border:1.3px solid #2360e8;background:#fff"></div><div class="a" style="left:125px;top:274px;width:20px;height:3px;background:rgba(90,90,90,.45)"></div><div class="a" style="left:170px;top:276px;width:16px;height:1px;background:#2360e8;opacity:.5"></div><div class="a" style="left:186px;top:269px;width:120px;height:3.5px;background:rgba(60,60,60,.33)"></div><div class="a" style="left:186px;top:276px;width:60px;height:3.5px;background:rgba(60,60,60,.33)"></div><div class="a" style="left:97px;top:294px;width:5px;height:1px;background:#2360e8;opacity:.6"></div><div class="a" style="left:102px;top:289px;width:68px;height:10px;border:1.3px solid #2360e8;background:#fff"></div><div class="a" style="left:125px;top:292px;width:20px;height:3px;background:rgba(90,90,90,.45)"></div><div class="a" style="left:170px;top:294px;width:16px;height:1px;background:#2360e8;opacity:.5"></div><div class="a" style="left:186px;top:287px;width:120px;height:3.5px;background:rgba(60,60,60,.33)"></div><div class="a" style="left:186px;top:294px;width:60px;height:3.5px;background:rgba(60,60,60,.33)"></div><div class="a" style="left:97px;top:311px;width:5px;height:1px;background:#2360e8;opacity:.6"></div><div class="a" style="left:102px;top:306px;width:68px;height:10px;border:1.3px solid #2360e8;background:#fff"></div><div class="a" style="left:125px;top:309px;width:20px;height:3px;background:rgba(90,90,90,.45)"></div><div class="a" style="left:170px;top:311px;width:16px;height:1px;background:#2360e8;opacity:.5"></div><div class="a" style="left:186px;top:304px;width:120px;height:3.5px;background:rgba(60,60,60,.33)"></div><div class="a" style="left:186px;top:311px;width:60px;height:3.5px;background:rgba(60,60,60,.33)"></div><div class="a" style="left:97px;top:329px;width:5px;height:1px;background:#2360e8;opacity:.6"></div><div class="a" style="left:102px;top:324px;width:68px;height:10px;border:1.3px solid #2360e8;background:#fff"></div><div class="a" style="left:125px;top:327px;width:20px;height:3px;background:rgba(90,90,90,.45)"></div><div class="a" style="left:170px;top:329px;width:16px;height:1px;background:#2360e8;opacity:.5"></div><div class="a" style="left:186px;top:322px;width:120px;height:3.5px;background:rgba(60,60,60,.33)"></div><div class="a" style="left:186px;top:329px;width:60px;height:3.5px;background:rgba(60,60,60,.33)"></div><div class="a" style="left:43px;top:350px;width:269px;height:73px;border:1px dashed #ae3cf0"></div><div class="a" style="left:26px;top:386px;width:20px;height:1.5px;background:#ae3cf0"></div><div class="a" style="left:45px;top:380px;width:48px;height:13px;border-radius:2px;background:#ae3cf0"></div><div class="a" style="left:51px;top:384px;width:32px;height:5px;background:rgba(255,255,255,.7)"></div><div class="a" style="left:102px;top:354px;width:205px;height:9px;background:#ae3cf0"></div><div class="a" style="left:175px;top:355.5px;width:62px;height:5px;background:rgba(255,255,255,.7)"></div><div class="a" style="left:93px;top:386px;width:5px;height:1px;background:#ae3cf0"></div><div class="a" style="left:97px;top:358px;width:1px;height:58px;background:#ae3cf0;opacity:.6"></div><div class="a" style="left:97px;top:372px;width:5px;height:1px;background:#ae3cf0;opacity:.6"></div><div class="a" style="left:102px;top:367px;width:68px;height:10px;border:1.3px solid #ae3cf0;background:#fff"></div><div class="a" style="left:125px;top:370px;width:20px;height:3px;background:rgba(90,90,90,.45)"></div><div class="a" style="left:170px;top:372px;width:16px;height:1px;background:#ae3cf0;opacity:.5"></div><div class="a" style="left:186px;top:365px;width:120px;height:3.5px;background:rgba(60,60,60,.33)"></div><div class="a" style="left:186px;top:372px;width:60px;height:3.5px;background:rgba(60,60,60,.33)"></div><div class="a" style="left:97px;top:390px;width:5px;height:1px;background:#ae3cf0;opacity:.6"></div><div class="a" style="left:102px;top:385px;width:68px;height:10px;border:1.3px solid #ae3cf0;background:#fff"></div><div class="a" style="left:125px;top:388px;width:20px;height:3px;background:rgba(90,90,90,.45)"></div><div class="a" style="left:170px;top:390px;width:16px;height:1px;background:#ae3cf0;opacity:.5"></div><div class="a" style="left:186px;top:383px;width:120px;height:3.5px;background:rgba(60,60,60,.33)"></div><div class="a" style="left:186px;top:390px;width:60px;height:3.5px;background:rgba(60,60,60,.33)"></div><div class="a" style="left:97px;top:404px;width:5px;height:1px;background:#ae3cf0;opacity:.6"></div><div class="a" style="left:102px;top:399px;width:68px;height:10px;border:1.3px solid #ae3cf0;background:#fff"></div><div class="a" style="left:125px;top:402px;width:20px;height:3px;background:rgba(90,90,90,.45)"></div><div class="a" style="left:170px;top:404px;width:16px;height:1px;background:#ae3cf0;opacity:.5"></div><div class="a" style="left:186px;top:397px;width:120px;height:3.5px;background:rgba(60,60,60,.33)"></div><div class="a" style="left:186px;top:404px;width:60px;height:3.5px;background:rgba(60,60,60,.33)"></div><div class="a" style="left:97px;top:416px;width:5px;height:1px;background:#ae3cf0;opacity:.6"></div><div class="a" style="left:102px;top:411px;width:68px;height:10px;border:1.3px solid #ae3cf0;background:#fff"></div><div class="a" style="left:125px;top:414px;width:20px;height:3px;background:rgba(90,90,90,.45)"></div><div class="a" style="left:170px;top:416px;width:16px;height:1px;background:#ae3cf0;opacity:.5"></div><div class="a" style="left:186px;top:409px;width:120px;height:3.5px;background:rgba(60,60,60,.33)"></div><div class="a" style="left:186px;top:416px;width:60px;height:3.5px;background:rgba(60,60,60,.33)"></div><div class="a" style="left:43px;top:434px;width:269px;height:85px;border:1px dashed #f4702a"></div><div class="a" style="left:26px;top:475px;width:20px;height:1.5px;background:#f4702a"></div><div class="a" style="left:45px;top:469px;width:48px;height:13px;border-radius:2px;background:#f4702a"></div><div class="a" style="left:51px;top:473px;width:32px;height:5px;background:rgba(255,255,255,.7)"></div><div class="a" style="left:102px;top:438px;width:205px;height:9px;background:#f4702a"></div><div class="a" style="left:175px;top:439.5px;width:62px;height:5px;background:rgba(255,255,255,.7)"></div><div class="a" style="left:93px;top:475px;width:5px;height:1px;background:#f4702a"></div><div class="a" style="left:97px;top:442px;width:1px;height:67px;background:#f4702a;opacity:.6"></div><div class="a" style="left:97px;top:456px;width:5px;height:1px;background:#f4702a;opacity:.6"></div><div class="a" style="left:102px;top:451px;width:68px;height:10px;border:1.3px solid #f4702a;background:#fff"></div><div class="a" style="left:125px;top:454px;width:20px;height:3px;background:rgba(90,90,90,.45)"></div><div class="a" style="left:170px;top:456px;width:16px;height:1px;background:#f4702a;opacity:.5"></div><div class="a" style="left:186px;top:449px;width:120px;height:3.5px;background:rgba(60,60,60,.33)"></div><div class="a" style="left:186px;top:456px;width:60px;height:3.5px;background:rgba(60,60,60,.33)"></div><div class="a" style="left:97px;top:474px;width:5px;height:1px;background:#f4702a;opacity:.6"></div><div class="a" style="left:102px;top:469px;width:68px;height:10px;border:1.3px solid #f4702a;background:#fff"></div><div class="a" style="left:125px;top:472px;width:20px;height:3px;background:rgba(90,90,90,.45)"></div><div class="a" style="left:170px;top:474px;width:16px;height:1px;background:#f4702a;opacity:.5"></div><div class="a" style="left:186px;top:467px;width:120px;height:3.5px;background:rgba(60,60,60,.33)"></div><div class="a" style="left:186px;top:474px;width:60px;height:3.5px;background:rgba(60,60,60,.33)"></div><div class="a" style="left:97px;top:491px;width:5px;height:1px;background:#f4702a;opacity:.6"></div><div class="a" style="left:102px;top:486px;width:68px;height:10px;border:1.3px solid #f4702a;background:#fff"></div><div class="a" style="left:125px;top:489px;width:20px;height:3px;background:rgba(90,90,90,.45)"></div><div class="a" style="left:170px;top:491px;width:16px;height:1px;background:#f4702a;opacity:.5"></div><div class="a" style="left:186px;top:484px;width:120px;height:3.5px;background:rgba(60,60,60,.33)"></div><div class="a" style="left:186px;top:491px;width:60px;height:3.5px;background:rgba(60,60,60,.33)"></div><div class="a" style="left:97px;top:509px;width:5px;height:1px;background:#f4702a;opacity:.6"></div><div class="a" style="left:102px;top:504px;width:68px;height:10px;border:1.3px solid #f4702a;background:#fff"></div><div class="a" style="left:125px;top:507px;width:20px;height:3px;background:rgba(90,90,90,.45)"></div><div class="a" style="left:170px;top:509px;width:16px;height:1px;background:#f4702a;opacity:.5"></div><div class="a" style="left:186px;top:502px;width:120px;height:3.5px;background:rgba(60,60,60,.33)"></div><div class="a" style="left:186px;top:509px;width:60px;height:3.5px;background:rgba(60,60,60,.33)"></div><div class="a" style="left:43px;top:530px;width:269px;height:56px;border:1px dashed #6daa3c"></div><div class="a" style="left:26px;top:558px;width:20px;height:1.5px;background:#6daa3c"></div><div class="a" style="left:45px;top:552px;width:48px;height:13px;border-radius:2px;background:#6daa3c"></div><div class="a" style="left:51px;top:556px;width:32px;height:5px;background:rgba(255,255,255,.7)"></div><div class="a" style="left:102px;top:534px;width:205px;height:9px;background:#6daa3c"></div><div class="a" style="left:175px;top:535.5px;width:62px;height:5px;background:rgba(255,255,255,.7)"></div><div class="a" style="left:93px;top:558px;width:5px;height:1px;background:#6daa3c"></div><div class="a" style="left:97px;top:538px;width:1px;height:40px;background:#6daa3c;opacity:.6"></div><div class="a" style="left:97px;top:550px;width:5px;height:1px;background:#6daa3c;opacity:.6"></div><div class="a" style="left:102px;top:545px;width:68px;height:10px;border:1.3px solid #6daa3c;background:#fff"></div><div class="a" style="left:125px;top:548px;width:20px;height:3px;background:rgba(90,90,90,.45)"></div><div class="a" style="left:170px;top:550px;width:16px;height:1px;background:#6daa3c;opacity:.5"></div><div class="a" style="left:186px;top:543px;width:120px;height:3.5px;background:rgba(60,60,60,.33)"></div><div class="a" style="left:186px;top:550px;width:60px;height:3.5px;background:rgba(60,60,60,.33)"></div><div class="a" style="left:97px;top:564px;width:5px;height:1px;background:#6daa3c;opacity:.6"></div><div class="a" style="left:102px;top:559px;width:68px;height:10px;border:1.3px solid #6daa3c;background:#fff"></div><div class="a" style="left:125px;top:562px;width:20px;height:3px;background:rgba(90,90,90,.45)"></div><div class="a" style="left:170px;top:564px;width:16px;height:1px;background:#6daa3c;opacity:.5"></div><div class="a" style="left:186px;top:557px;width:120px;height:3.5px;background:rgba(60,60,60,.33)"></div><div class="a" style="left:186px;top:564px;width:60px;height:3.5px;background:rgba(60,60,60,.33)"></div><div class="a" style="left:97px;top:578px;width:5px;height:1px;background:#6daa3c;opacity:.6"></div><div class="a" style="left:102px;top:573px;width:68px;height:10px;border:1.3px solid #6daa3c;background:#fff"></div><div class="a" style="left:125px;top:576px;width:20px;height:3px;background:rgba(90,90,90,.45)"></div><div class="a" style="left:170px;top:578px;width:16px;height:1px;background:#6daa3c;opacity:.5"></div><div class="a" style="left:186px;top:571px;width:120px;height:3.5px;background:rgba(60,60,60,.33)"></div><div class="a" style="left:186px;top:578px;width:60px;height:3.5px;background:rgba(60,60,60,.33)"></div><div class="a" style="left:43px;top:597px;width:269px;height:103px;border:1px dashed #12b6f0"></div><div class="a" style="left:26px;top:661px;width:20px;height:1.5px;background:#12b6f0"></div><div class="a" style="left:45px;top:655px;width:48px;height:13px;border-radius:2px;background:#12b6f0"></div><div class="a" style="left:51px;top:659px;width:32px;height:5px;background:rgba(255,255,255,.7)"></div><div class="a" style="left:102px;top:601px;width:205px;height:9px;background:#12b6f0"></div><div class="a" style="left:175px;top:602.5px;width:62px;height:5px;background:rgba(255,255,255,.7)"></div><div class="a" style="left:93px;top:661px;width:5px;height:1px;background:#12b6f0"></div><div class="a" style="left:97px;top:605px;width:1px;height:13px;background:#12b6f0;opacity:.6"></div><div class="a" style="left:97px;top:618px;width:5px;height:1px;background:#12b6f0;opacity:.6"></div><div class="a" style="left:102px;top:613px;width:68px;height:10px;border:1.3px solid #12b6f0;background:#fff"></div><div class="a" style="left:125px;top:616px;width:20px;height:3px;background:rgba(90,90,90,.45)"></div><div class="a" style="left:170px;top:618px;width:16px;height:1px;background:#12b6f0;opacity:.5"></div><div class="a" style="left:186px;top:611px;width:120px;height:3.5px;background:rgba(60,60,60,.33)"></div><div class="a" style="left:186px;top:618px;width:60px;height:3.5px;background:rgba(60,60,60,.33)"></div></div>
<div class="t ctitle" style="left: 708px; top: 1114px; --w: 311px; transform-origin: 0px 0px; transform: scaleX(1);">作業効率を向上させる8つの古典的</div>
<svg style="left:725px;top:440px" width="43" height="42"><defs><linearGradient id="hg729" x1="0" y1="0" x2="1" y2="1"><stop offset="0" stop-color="#ff6a58"></stop><stop offset="1" stop-color="#ff2585"></stop></linearGradient></defs><path d="M0 5 L4 0 V5z M39 0 L43 5 H39z" fill="#a8402e"></path><path d="M4 0 H39 V42 L21.5 35 L4 42z" fill="url(#hg729)"></path><text x="21.5" y="24.5" font-size="21.5" fill="#fff" stroke="#fff" stroke-width=".5" text-anchor="middle" font-family="Liberation Sans">hot</text></svg>
<div class="a card" style="left:1072px;top:443px;width:350px;height:410px"></div>
<div class="a img" style="left:1083px;top:454px;width:328px;height:239px;border-radius:4px"><svg style="left:0;top:0" width="328" height="239"><rect x="2" y="3" width="325" height="235" rx="5" fill="none" stroke="#5b8fe0" stroke-width="1.4"></rect><path d="M12 17 H100 M222 17 H312" stroke="#a9c2ee" stroke-width="1"></path><circle cx="17" cy="17" r="3" fill="#e3ebfb" stroke="#9bb8ec" stroke-width="1"></circle><circle cx="56" cy="17" r="4.2" fill="#e3ebfb" stroke="#9bb8ec" stroke-width="1"></circle><circle cx="69" cy="17" r="4.2" fill="#e3ebfb" stroke="#9bb8ec" stroke-width="1"></circle><circle cx="82" cy="17" r="4.2" fill="#e3ebfb" stroke="#9bb8ec" stroke-width="1"></circle><circle cx="95" cy="17" r="4.2" fill="#e3ebfb" stroke="#9bb8ec" stroke-width="1"></circle><circle cx="227.0" cy="17" r="4.2" fill="#e3ebfb" stroke="#9bb8ec" stroke-width="1"></circle><circle cx="240.3" cy="17" r="4.2" fill="#e3ebfb" stroke="#9bb8ec" stroke-width="1"></circle><circle cx="253.6" cy="17" r="4.2" fill="#e3ebfb" stroke="#9bb8ec" stroke-width="1"></circle><circle cx="266.9" cy="17" r="4.2" fill="#e3ebfb" stroke="#9bb8ec" stroke-width="1"></circle><circle cx="280.2" cy="17" r="4.2" fill="#e3ebfb" stroke="#9bb8ec" stroke-width="1"></circle><circle cx="293.5" cy="17" r="4.2" fill="#e3ebfb" stroke="#9bb8ec" stroke-width="1"></circle><circle cx="306.8" cy="17" r="4.2" fill="#e3ebfb" stroke="#9bb8ec" stroke-width="1"></circle><text x="130" y="20.5" font-size="8.5" fill="#222" font-family="Liberation Sans" textLength="66" lengthAdjust="spacingAndGlyphs">人事管理部年間計画</text><path d="M150 134 C142 134 154 65.35 140 65.35" fill="none" stroke="#5a5fa3" stroke-width="1.1" opacity=".55"></path><path d="M150 134 C142 134 154 132.9 140 132.9" fill="none" stroke="#a86a9e" stroke-width="1.1" opacity=".55"></path><path d="M150 134 C142 134 154 202.20000000000002 140 202.20000000000002" fill="none" stroke="#2f8b7b" stroke-width="1.1" opacity=".55"></path><path d="M178 134 C186 134 175 59.2 189 59.2" fill="none" stroke="#a94a3b" stroke-width="1.1" opacity=".55"></path><path d="M178 134 C186 134 175 133.9 189 133.9" fill="none" stroke="#3a98b6" stroke-width="1.1" opacity=".55"></path><path d="M178 134 C186 134 175 208.25 189 208.25" fill="none" stroke="#b9801c" stroke-width="1.1" opacity=".55"></path><rect x="150" y="117" width="29" height="34" fill="#4b8fe2"></rect><rect x="155" y="122" width="19" height="9" fill="#f2c060" opacity=".85"></rect><rect x="153" y="137" width="23" height="4" fill="#fff" opacity=".7"></rect><path d="M179 134 H189" stroke="#3a98b6" stroke-width="1" opacity=".5"></path><rect x="107" y="53.6" width="33" height="23.5" fill="#5a5fa3"></rect><rect x="120" y="58.6" width="8" height="7" fill="#fff" opacity=".45"></rect><rect x="113" y="69.1" width="21" height="3" fill="#fff" opacity=".55"></rect><path d="M103 43 V86 M103 65.35 H107" fill="none" stroke="#5a5fa3" stroke-width=".8" opacity=".5"></path><path d="M102 43 H103" stroke="#5a5fa3" stroke-width=".8" opacity=".5"></path><rect x="73" y="38.5" width="29" height="9" rx="2.5" fill="#d6d8ef" stroke="#5a5fa3" stroke-width=".7" stroke-opacity=".6"></rect><rect x="80" y="41.8" width="15" height="2.4" fill="#444" opacity=".35"></rect><path d="M102 64.6 H103" stroke="#5a5fa3" stroke-width=".8" opacity=".5"></path><rect x="73" y="60.099999999999994" width="29" height="9" rx="2.5" fill="#d6d8ef" stroke="#5a5fa3" stroke-width=".7" stroke-opacity=".6"></rect><rect x="80" y="63.39999999999999" width="15" height="2.4" fill="#444" opacity=".35"></rect><path d="M102 86 H103" stroke="#5a5fa3" stroke-width=".8" opacity=".5"></path><rect x="73" y="81.5" width="29" height="9" rx="2.5" fill="#d6d8ef" stroke="#5a5fa3" stroke-width=".7" stroke-opacity=".6"></rect><rect x="80" y="84.8" width="15" height="2.4" fill="#444" opacity=".35"></rect><rect x="24.5" y="33" width="45" height="64" fill="none" stroke="#5a5fa3" stroke-width="1" stroke-dasharray="1.6 2.2" opacity=".5"></rect><path d="M27.5 37.0 H66.5" stroke="#5a5fa3" stroke-width="2" stroke-dasharray="1.3 3" opacity=".6"></path><rect x="34.5" y="39.2" width="28" height="2" fill="#555" opacity=".22"></rect><path d="M27.5 44.2 H66.5" stroke="#5a5fa3" stroke-width="2" stroke-dasharray="1.3 3" opacity=".6"></path><rect x="34.5" y="46.400000000000006" width="24" height="2" fill="#555" opacity=".22"></rect><path d="M27.5 51.4 H66.5" stroke="#5a5fa3" stroke-width="2" stroke-dasharray="1.3 3" opacity=".6"></path><rect x="34.5" y="53.6" width="28" height="2" fill="#555" opacity=".22"></rect><path d="M27.5 58.6 H66.5" stroke="#5a5fa3" stroke-width="2" stroke-dasharray="1.3 3" opacity=".6"></path><rect x="34.5" y="60.800000000000004" width="24" height="2" fill="#555" opacity=".22"></rect><path d="M27.5 65.8 H66.5" stroke="#5a5fa3" stroke-width="2" stroke-dasharray="1.3 3" opacity=".6"></path><rect x="34.5" y="68.0" width="28" height="2" fill="#555" opacity=".22"></rect><path d="M27.5 73.0 H66.5" stroke="#5a5fa3" stroke-width="2" stroke-dasharray="1.3 3" opacity=".6"></path><rect x="34.5" y="75.2" width="24" height="2" fill="#555" opacity=".22"></rect><path d="M27.5 80.2 H66.5" stroke="#5a5fa3" stroke-width="2" stroke-dasharray="1.3 3" opacity=".6"></path><rect x="34.5" y="82.4" width="28" height="2" fill="#555" opacity=".22"></rect><path d="M27.5 87.4 H66.5" stroke="#5a5fa3" stroke-width="2" stroke-dasharray="1.3 3" opacity=".6"></path><rect x="34.5" y="89.60000000000001" width="24" height="2" fill="#555" opacity=".22"></rect><rect x="107" y="121.4" width="33" height="23" fill="#a86a9e"></rect><rect x="120" y="126.4" width="8" height="7" fill="#fff" opacity=".45"></rect><rect x="113" y="136.4" width="21" height="3" fill="#fff" opacity=".55"></rect><path d="M103 110.8 V154 M103 132.9 H107" fill="none" stroke="#a86a9e" stroke-width=".8" opacity=".5"></path><path d="M102 110.8 H103" stroke="#a86a9e" stroke-width=".8" opacity=".5"></path><rect x="73" y="106.3" width="29" height="9" rx="2.5" fill="#efd8ea" stroke="#a86a9e" stroke-width=".7" stroke-opacity=".6"></rect><rect x="80" y="109.6" width="15" height="2.4" fill="#444" opacity=".35"></rect><path d="M102 132.8 H103" stroke="#a86a9e" stroke-width=".8" opacity=".5"></path><rect x="73" y="128.3" width="29" height="9" rx="2.5" fill="#efd8ea" stroke="#a86a9e" stroke-width=".7" stroke-opacity=".6"></rect><rect x="80" y="131.60000000000002" width="15" height="2.4" fill="#444" opacity=".35"></rect><path d="M102 154 H103" stroke="#a86a9e" stroke-width=".8" opacity=".5"></path><rect x="73" y="149.5" width="29" height="9" rx="2.5" fill="#efd8ea" stroke="#a86a9e" stroke-width=".7" stroke-opacity=".6"></rect><rect x="80" y="152.8" width="15" height="2.4" fill="#444" opacity=".35"></rect><rect x="24.5" y="101.6" width="45" height="63.400000000000006" fill="none" stroke="#a86a9e" stroke-width="1" stroke-dasharray="1.6 2.2" opacity=".5"></rect><path d="M27.5 105.6 H66.5" stroke="#a86a9e" stroke-width="2" stroke-dasharray="1.3 3" opacity=".6"></path><rect x="34.5" y="107.8" width="28" height="2" fill="#555" opacity=".22"></rect><path d="M27.5 112.8 H66.5" stroke="#a86a9e" stroke-width="2" stroke-dasharray="1.3 3" opacity=".6"></path><rect x="34.5" y="115.0" width="24" height="2" fill="#555" opacity=".22"></rect><path d="M27.5 120.0 H66.5" stroke="#a86a9e" stroke-width="2" stroke-dasharray="1.3 3" opacity=".6"></path><rect x="34.5" y="122.2" width="28" height="2" fill="#555" opacity=".22"></rect><path d="M27.5 127.19999999999999 H66.5" stroke="#a86a9e" stroke-width="2" stroke-dasharray="1.3 3" opacity=".6"></path><rect x="34.5" y="129.39999999999998" width="24" height="2" fill="#555" opacity=".22"></rect><path d="M27.5 134.4 H66.5" stroke="#a86a9e" stroke-width="2" stroke-dasharray="1.3 3" opacity=".6"></path><rect x="34.5" y="136.6" width="28" height="2" fill="#555" opacity=".22"></rect><path d="M27.5 141.6 H66.5" stroke="#a86a9e" stroke-width="2" stroke-dasharray="1.3 3" opacity=".6"></path><rect x="34.5" y="143.79999999999998" width="24" height="2" fill="#555" opacity=".22"></rect><path d="M27.5 148.8 H66.5" stroke="#a86a9e" stroke-width="2" stroke-dasharray="1.3 3" opacity=".6"></path><rect x="34.5" y="151.0" width="28" height="2" fill="#555" opacity=".22"></rect><path d="M27.5 156.0 H66.5" stroke="#a86a9e" stroke-width="2" stroke-dasharray="1.3 3" opacity=".6"></path><rect x="34.5" y="158.2" width="24" height="2" fill="#555" opacity=".22"></rect><rect x="107" y="188.4" width="33" height="27.6" fill="#2f8b7b"></rect><rect x="120" y="193.4" width="8" height="7" fill="#fff" opacity=".45"></rect><rect x="113" y="208.0" width="21" height="3" fill="#fff" opacity=".55"></rect><path d="M103 179 V223.6 M103 202.20000000000002 H107" fill="none" stroke="#2f8b7b" stroke-width=".8" opacity=".5"></path><path d="M102 179 H103" stroke="#2f8b7b" stroke-width=".8" opacity=".5"></path><rect x="73" y="174.5" width="29" height="9" rx="2.5" fill="#d2ece7" stroke="#2f8b7b" stroke-width=".7" stroke-opacity=".6"></rect><rect x="80" y="177.8" width="15" height="2.4" fill="#444" opacity=".35"></rect><path d="M102 200.5 H103" stroke="#2f8b7b" stroke-width=".8" opacity=".5"></path><rect x="73" y="196.0" width="29" height="9" rx="2.5" fill="#d2ece7" stroke="#2f8b7b" stroke-width=".7" stroke-opacity=".6"></rect><rect x="80" y="199.3" width="15" height="2.4" fill="#444" opacity=".35"></rect><path d="M102 223.6 H103" stroke="#2f8b7b" stroke-width=".8" opacity=".5"></path><rect x="73" y="219.1" width="29" height="9" rx="2.5" fill="#d2ece7" stroke="#2f8b7b" stroke-width=".7" stroke-opacity=".6"></rect><rect x="80" y="222.4" width="15" height="2.4" fill="#444" opacity=".35"></rect><rect x="24.5" y="169.7" width="45" height="67.10000000000002" fill="none" stroke="#2f8b7b" stroke-width="1" stroke-dasharray="1.6 2.2" opacity=".5"></rect><path d="M27.5 173.7 H66.5" stroke="#2f8b7b" stroke-width="2" stroke-dasharray="1.3 3" opacity=".6"></path><rect x="34.5" y="175.89999999999998" width="28" height="2" fill="#555" opacity=".22"></rect><path d="M27.5 180.89999999999998 H66.5" stroke="#2f8b7b" stroke-width="2" stroke-dasharray="1.3 3" opacity=".6"></path><rect x="34.5" y="183.09999999999997" width="24" height="2" fill="#555" opacity=".22"></rect><path d="M27.5 188.1 H66.5" stroke="#2f8b7b" stroke-width="2" stroke-dasharray="1.3 3" opacity=".6"></path><rect x="34.5" y="190.29999999999998" width="28" height="2" fill="#555" opacity=".22"></rect><path d="M27.5 195.29999999999998 H66.5" stroke="#2f8b7b" stroke-width="2" stroke-dasharray="1.3 3" opacity=".6"></path><rect x="34.5" y="197.49999999999997" width="24" height="2" fill="#555" opacity=".22"></rect><path d="M27.5 202.5 H66.5" stroke="#2f8b7b" stroke-width="2" stroke-dasharray="1.3 3" opacity=".6"></path><rect x="34.5" y="204.7" width="28" height="2" fill="#555" opacity=".22"></rect><path d="M27.5 209.7 H66.5" stroke="#2f8b7b" stroke-width="2" stroke-dasharray="1.3 3" opacity=".6"></path><rect x="34.5" y="211.89999999999998" width="24" height="2" fill="#555" opacity=".22"></rect><path d="M27.5 216.89999999999998 H66.5" stroke="#2f8b7b" stroke-width="2" stroke-dasharray="1.3 3" opacity=".6"></path><rect x="34.5" y="219.09999999999997" width="28" height="2" fill="#555" opacity=".22"></rect><path d="M27.5 224.1 H66.5" stroke="#2f8b7b" stroke-width="2" stroke-dasharray="1.3 3" opacity=".6"></path><rect x="34.5" y="226.29999999999998" width="24" height="2" fill="#555" opacity=".22"></rect><path d="M27.5 231.29999999999998 H66.5" stroke="#2f8b7b" stroke-width="2" stroke-dasharray="1.3 3" opacity=".6"></path><rect x="34.5" y="233.49999999999997" width="28" height="2" fill="#555" opacity=".22"></rect><rect x="189" y="47" width="34" height="24.4" fill="#a94a3b"></rect><rect x="202" y="52" width="8" height="7" fill="#fff" opacity=".45"></rect><rect x="195" y="63.400000000000006" width="22" height="3" fill="#fff" opacity=".55"></rect><path d="M227 37.8 V80.6 M223 59.2 H227" fill="none" stroke="#a94a3b" stroke-width=".8" opacity=".5"></path><path d="M227 37.8 H227" stroke="#a94a3b" stroke-width=".8" opacity=".5"></path><rect x="227" y="33.3" width="29" height="9" rx="2.5" fill="#f4c9c2" stroke="#a94a3b" stroke-width=".7" stroke-opacity=".6"></rect><rect x="234" y="36.599999999999994" width="15" height="2.4" fill="#444" opacity=".35"></rect><path d="M227 59.3 H227" stroke="#a94a3b" stroke-width=".8" opacity=".5"></path><rect x="227" y="54.8" width="29" height="9" rx="2.5" fill="#f4c9c2" stroke="#a94a3b" stroke-width=".7" stroke-opacity=".6"></rect><rect x="234" y="58.099999999999994" width="15" height="2.4" fill="#444" opacity=".35"></rect><path d="M227 80.6 H227" stroke="#a94a3b" stroke-width=".8" opacity=".5"></path><rect x="227" y="76.1" width="29" height="9" rx="2.5" fill="#f4c9c2" stroke="#a94a3b" stroke-width=".7" stroke-opacity=".6"></rect><rect x="234" y="79.39999999999999" width="15" height="2.4" fill="#444" opacity=".35"></rect><rect x="259" y="27" width="45" height="63.5" fill="none" stroke="#a94a3b" stroke-width="1" stroke-dasharray="1.6 2.2" opacity=".5"></rect><path d="M262 31.0 H301" stroke="#a94a3b" stroke-width="2" stroke-dasharray="1.3 3" opacity=".6"></path><rect x="269" y="33.2" width="28" height="2" fill="#555" opacity=".22"></rect><path d="M262 38.2 H301" stroke="#a94a3b" stroke-width="2" stroke-dasharray="1.3 3" opacity=".6"></path><rect x="269" y="40.400000000000006" width="24" height="2" fill="#555" opacity=".22"></rect><path d="M262 45.4 H301" stroke="#a94a3b" stroke-width="2" stroke-dasharray="1.3 3" opacity=".6"></path><rect x="269" y="47.6" width="28" height="2" fill="#555" opacity=".22"></rect><path d="M262 52.6 H301" stroke="#a94a3b" stroke-width="2" stroke-dasharray="1.3 3" opacity=".6"></path><rect x="269" y="54.800000000000004" width="24" height="2" fill="#555" opacity=".22"></rect><path d="M262 59.8 H301" stroke="#a94a3b" stroke-width="2" stroke-dasharray="1.3 3" opacity=".6"></path><rect x="269" y="62.0" width="28" height="2" fill="#555" opacity=".22"></rect><path d="M262 67.0 H301" stroke="#a94a3b" stroke-width="2" stroke-dasharray="1.3 3" opacity=".6"></path><rect x="269" y="69.2" width="24" height="2" fill="#555" opacity=".22"></rect><path d="M262 74.2 H301" stroke="#a94a3b" stroke-width="2" stroke-dasharray="1.3 3" opacity=".6"></path><rect x="269" y="76.4" width="28" height="2" fill="#555" opacity=".22"></rect><path d="M262 81.4 H301" stroke="#a94a3b" stroke-width="2" stroke-dasharray="1.3 3" opacity=".6"></path><rect x="269" y="83.60000000000001" width="24" height="2" fill="#555" opacity=".22"></rect><rect x="189" y="119" width="34" height="29.8" fill="#3a98b6"></rect><rect x="202" y="124" width="8" height="7" fill="#fff" opacity=".45"></rect><rect x="195" y="140.8" width="22" height="3" fill="#fff" opacity=".55"></rect><path d="M227 110 V158 M223 133.9 H227" fill="none" stroke="#3a98b6" stroke-width=".8" opacity=".5"></path><path d="M227 110 H227" stroke="#3a98b6" stroke-width=".8" opacity=".5"></path><rect x="227" y="105.5" width="29" height="9" rx="2.5" fill="#d3eaf3" stroke="#3a98b6" stroke-width=".7" stroke-opacity=".6"></rect><rect x="234" y="108.8" width="15" height="2.4" fill="#444" opacity=".35"></rect><path d="M227 135.6 H227" stroke="#3a98b6" stroke-width=".8" opacity=".5"></path><rect x="227" y="131.1" width="29" height="9" rx="2.5" fill="#d3eaf3" stroke="#3a98b6" stroke-width=".7" stroke-opacity=".6"></rect><rect x="234" y="134.4" width="15" height="2.4" fill="#444" opacity=".35"></rect><path d="M227 158 H227" stroke="#3a98b6" stroke-width=".8" opacity=".5"></path><rect x="227" y="153.5" width="29" height="9" rx="2.5" fill="#d3eaf3" stroke="#3a98b6" stroke-width=".7" stroke-opacity=".6"></rect><rect x="234" y="156.8" width="15" height="2.4" fill="#444" opacity=".35"></rect><rect x="259" y="96" width="45" height="76" fill="none" stroke="#3a98b6" stroke-width="1" stroke-dasharray="1.6 2.2" opacity=".5"></rect><path d="M262 100.0 H301" stroke="#3a98b6" stroke-width="2" stroke-dasharray="1.3 3" opacity=".6"></path><rect x="269" y="102.2" width="28" height="2" fill="#555" opacity=".22"></rect><path d="M262 107.2 H301" stroke="#3a98b6" stroke-width="2" stroke-dasharray="1.3 3" opacity=".6"></path><rect x="269" y="109.4" width="24" height="2" fill="#555" opacity=".22"></rect><path d="M262 114.4 H301" stroke="#3a98b6" stroke-width="2" stroke-dasharray="1.3 3" opacity=".6"></path><rect x="269" y="116.60000000000001" width="28" height="2" fill="#555" opacity=".22"></rect><path d="M262 121.6 H301" stroke="#3a98b6" stroke-width="2" stroke-dasharray="1.3 3" opacity=".6"></path><rect x="269" y="123.8" width="24" height="2" fill="#555" opacity=".22"></rect><path d="M262 128.8 H301" stroke="#3a98b6" stroke-width="2" stroke-dasharray="1.3 3" opacity=".6"></path><rect x="269" y="131.0" width="28" height="2" fill="#555" opacity=".22"></rect><path d="M262 136.0 H301" stroke="#3a98b6" stroke-width="2" stroke-dasharray="1.3 3" opacity=".6"></path><rect x="269" y="138.2" width="24" height="2" fill="#555" opacity=".22"></rect><path d="M262 143.2 H301" stroke="#3a98b6" stroke-width="2" stroke-dasharray="1.3 3" opacity=".6"></path><rect x="269" y="145.39999999999998" width="28" height="2" fill="#555" opacity=".22"></rect><path d="M262 150.4 H301" stroke="#3a98b6" stroke-width="2" stroke-dasharray="1.3 3" opacity=".6"></path><rect x="269" y="152.6" width="24" height="2" fill="#555" opacity=".22"></rect><path d="M262 157.6 H301" stroke="#3a98b6" stroke-width="2" stroke-dasharray="1.3 3" opacity=".6"></path><rect x="269" y="159.79999999999998" width="28" height="2" fill="#555" opacity=".22"></rect><path d="M262 164.8 H301" stroke="#3a98b6" stroke-width="2" stroke-dasharray="1.3 3" opacity=".6"></path><rect x="269" y="167.0" width="24" height="2" fill="#555" opacity=".22"></rect><rect x="189" y="196.5" width="34" height="23.5" fill="#b9801c"></rect><rect x="202" y="201.5" width="8" height="7" fill="#fff" opacity=".45"></rect><rect x="195" y="212.0" width="22" height="3" fill="#fff" opacity=".55"></rect><path d="M227 186.8 V229 M223 208.25 H227" fill="none" stroke="#b9801c" stroke-width=".8" opacity=".5"></path><path d="M227 186.8 H227" stroke="#b9801c" stroke-width=".8" opacity=".5"></path><rect x="227" y="182.3" width="29" height="9" rx="2.5" fill="#f8e2c2" stroke="#b9801c" stroke-width=".7" stroke-opacity=".6"></rect><rect x="234" y="185.60000000000002" width="15" height="2.4" fill="#444" opacity=".35"></rect><path d="M227 208 H227" stroke="#b9801c" stroke-width=".8" opacity=".5"></path><rect x="227" y="203.5" width="29" height="9" rx="2.5" fill="#f8e2c2" stroke="#b9801c" stroke-width=".7" stroke-opacity=".6"></rect><rect x="234" y="206.8" width="15" height="2.4" fill="#444" opacity=".35"></rect><path d="M227 229 H227" stroke="#b9801c" stroke-width=".8" opacity=".5"></path><rect x="227" y="224.5" width="29" height="9" rx="2.5" fill="#f8e2c2" stroke="#b9801c" stroke-width=".7" stroke-opacity=".6"></rect><rect x="234" y="227.8" width="15" height="2.4" fill="#444" opacity=".35"></rect><rect x="259" y="176" width="45" height="62" fill="none" stroke="#b9801c" stroke-width="1" stroke-dasharray="1.6 2.2" opacity=".5"></rect><path d="M262 180.0 H301" stroke="#b9801c" stroke-width="2" stroke-dasharray="1.3 3" opacity=".6"></path><rect x="269" y="182.2" width="28" height="2" fill="#555" opacity=".22"></rect><path d="M262 187.2 H301" stroke="#b9801c" stroke-width="2" stroke-dasharray="1.3 3" opacity=".6"></path><rect x="269" y="189.39999999999998" width="24" height="2" fill="#555" opacity=".22"></rect><path d="M262 194.4 H301" stroke="#b9801c" stroke-width="2" stroke-dasharray="1.3 3" opacity=".6"></path><rect x="269" y="196.6" width="28" height="2" fill="#555" opacity=".22"></rect><path d="M262 201.6 H301" stroke="#b9801c" stroke-width="2" stroke-dasharray="1.3 3" opacity=".6"></path><rect x="269" y="203.79999999999998" width="24" height="2" fill="#555" opacity=".22"></rect><path d="M262 208.8 H301" stroke="#b9801c" stroke-width="2" stroke-dasharray="1.3 3" opacity=".6"></path><rect x="269" y="211.0" width="28" height="2" fill="#555" opacity=".22"></rect><path d="M262 216.0 H301" stroke="#b9801c" stroke-width="2" stroke-dasharray="1.3 3" opacity=".6"></path><rect x="269" y="218.2" width="24" height="2" fill="#555" opacity=".22"></rect><path d="M262 223.2 H301" stroke="#b9801c" stroke-width="2" stroke-dasharray="1.3 3" opacity=".6"></path><rect x="269" y="225.39999999999998" width="28" height="2" fill="#555" opacity=".22"></rect><path d="M262 230.4 H301" stroke="#b9801c" stroke-width="2" stroke-dasharray="1.3 3" opacity=".6"></path><rect x="269" y="232.6" width="24" height="2" fill="#555" opacity=".22"></rect></svg></div>
<div class="t ctitle" style="left: 1084px; top: 730px; --w: 179px; transform-origin: 0px 0px; transform: scaleX(0.994444);">人事管理部年間計画</div>
<svg style="left:1085px;top:768px" width="17" height="13"><path d="M1 6.5 Q8.5 -2 16 6.5 Q8.5 15 1 6.5z" fill="none" stroke="#888" stroke-width="1.4"></path><circle cx="8.5" cy="6.5" r="2.6" fill="none" stroke="#888" stroke-width="1.4"></circle></svg>
<div class="t" style="left: 1107px; top: 765px; font-size: 19px; color: rgb(153, 153, 153); --w: 29px; transform-origin: 0px 0px; transform: scaleX(0.90625);">498</div>
<svg style="left:1149px;top:767px" width="14" height="16"><g fill="none" stroke="#888" stroke-width="1.4"><rect x="0.7" y="4.5" width="8" height="10.5" rx="1.5"></rect><path d="M4 4.5 V2 a1.3 1.3 0 0 1 1.3-1.3 H11.5 a1.3 1.3 0 0 1 1.3 1.3 V10 a1.3 1.3 0 0 1 -1.3 1.3 H8.7"></path></g></svg>
<div class="t" style="left: 1169px; top: 765px; font-size: 19px; color: rgb(153, 153, 153); --w: 18px; transform-origin: 0px 0px; transform: scaleX(0.857143);">23</div>
<svg style="left:1198px;top:766px" width="18" height="17"><path d="M9 1 L11.3 6.2 L17 6.6 L12.7 10.3 L14 16 L9 13 L4 16 L5.3 10.3 L1 6.6 L6.7 6.2z" fill="none" stroke="#888" stroke-width="1.3" stroke-linejoin="round"></path></svg>
<div class="t" style="left: 1219px; top: 765px; font-size: 19px; color: rgb(153, 153, 153); --w: 10px; transform-origin: 0px 0px; transform: scaleX(0.909091);">9</div>
<svg style="left:1240px;top:766px" width="16" height="16"><path d="M1 7 H4 V15 H1z M4 7 L7.5 1 a1.6 1.6 0 0 1 2.5 1.5 L9.3 6 H14 a1.5 1.5 0 0 1 1.4 1.8 L14 13.8 a1.6 1.6 0 0 1 -1.6 1.2 H4" fill="none" stroke="#888" stroke-width="1.3" stroke-linejoin="round"></path></svg>
<div class="t" style="left: 1261px; top: 765px; font-size: 19px; color: rgb(153, 153, 153); --w: 10px; transform-origin: 0px 0px; transform: scaleX(0.909091);">0</div>
<div class="a" style="left:1084px;top:807px;width:25px;height:25px;border-radius:50%;overflow:hidden;background:linear-gradient(180deg,#f4f4f4 0,#e2e2e2 45%,#9a8a7a 55%,#3a3028 75%,#2a2420)"><div class="a" style="left:4px;top:13px;width:9px;height:6px;border-radius:50%;background:#c08050;opacity:.7"></div><div class="a" style="left:14px;top:15px;width:8px;height:5px;border-radius:50%;background:#6a6a6a"></div></div>
<div class="t" style="left: 1115px; top: 808px; font-size: 20px; color: rgb(17, 17, 17); --w: 112px; transform-origin: 0px 0px; transform: scaleX(0.910569);">Sophiamarie_</div>
<svg style="left:1102px;top:440px" width="43" height="42"><defs><linearGradient id="hg1106" x1="0" y1="0" x2="1" y2="1"><stop offset="0" stop-color="#ff6a58"></stop><stop offset="1" stop-color="#ff2585"></stop></linearGradient></defs><path d="M0 5 L4 0 V5z M39 0 L43 5 H39z" fill="#a8402e"></path><path d="M4 0 H39 V42 L21.5 35 L4 42z" fill="url(#hg1106)"></path><text x="21.5" y="24.5" font-size="21.5" fill="#fff" stroke="#fff" stroke-width=".5" text-anchor="middle" font-family="Liberation Sans">hot</text></svg>
<div class="a card" style="left:1072px;top:889px;width:350px;height:271px"></div>
<div class="a img" style="left:1083px;top:900px;width:328px;height:234px;border-radius:12px 12px 0 0"><div class="a" style="left:0;top:0;width:328px;height:28px;background:#000;border-radius:12px 12px 0 0;border-bottom:2px solid #555"></div><div class="t" style="left: 96px; top: 9px; font-size: 12px; font-weight: bold; color: rgb(255, 255, 255); --w: 136px; transform-origin: 0px 0px; transform: scaleX(0.871795);">『ロビンソン・クルーソー』</div><div class="a" style="left:32.7px;top:39px;width:266px;height:320px;border:2px dashed #9b3cf0"></div><div class="a" style="left:34.4px;top:39px;width:262px;height:51.3px;border:2px dashed #8a2cf0;border-radius:6px"></div><div class="a" style="left:38px;top:45.3px;width:59.7px;height:15.7px;border-radius:8px;background:#fcdab0"></div><div class="t" style="left: 45px; top: 48px; font-size: 10px; font-weight: bold; color: rgb(58, 42, 26); --w: 45.7px; transform-origin: 0px 0px; transform: scaleX(0.761667);">著書について</div><div class="a" style="left:34.4px;top:101.3px;width:262px;height:56.000000000000014px;border:2px dashed #8a2cf0;border-radius:6px"></div><div class="a" style="left:38px;top:107.6px;width:45px;height:15.7px;border-radius:8px;background:#fcdab0"></div><div class="t" style="left: 45px; top: 110.3px; font-size: 10px; font-weight: bold; color: rgb(58, 42, 26); --w: 31px; transform-origin: 0px 0px; transform: scaleX(0.775);">主な内容</div><div class="a" style="left:34.4px;top:169px;width:262px;height:231px;border:2px dashed #8a2cf0;border-radius:6px"></div><div class="a" style="left:38px;top:175.3px;width:60px;height:15.7px;border-radius:8px;background:#fcdab0"></div><div class="t" style="left: 45px; top: 178px; font-size: 10px; font-weight: bold; color: rgb(58, 42, 26); --w: 46px; transform-origin: 0px 0px; transform: scaleX(0.766667);">創造的な背景</div><div class="a" style="left:50.6px;top:62.3px;width:1.6px;height:19.5px;background:#666"></div><div class="a" style="left:50.6px;top:70.0px;width:9px;height:1.6px;background:#666"></div><div class="a" style="left:50.6px;top:81.0px;width:9px;height:1.6px;background:#666"></div><div class="a" style="left:50.6px;top:121px;width:1.6px;height:18px;background:#666"></div><div class="a" style="left:50.6px;top:138.2px;width:9px;height:1.6px;background:#666"></div><div class="a" style="left:50.6px;top:190px;width:1.6px;height:50px;background:#666"></div><div class="a" style="left:50.6px;top:196.7px;width:9px;height:1.6px;background:#666"></div><div class="a" style="left:50.6px;top:212.6px;width:9px;height:1.6px;background:#666"></div><div class="a" style="left:50.6px;top:229.6px;width:9px;height:1.6px;background:#666"></div><div class="a" style="left:63.6px;top:67px;width:171.8px;height:5px;background:rgba(90,90,90,.28)"></div><div class="a" style="left:63.6px;top:80.6px;width:118.20000000000002px;height:5px;background:rgba(90,90,90,.28)"></div><div class="a" style="left:63.6px;top:128px;width:222.9px;height:5px;background:rgba(90,90,90,.28)"></div><div class="a" style="left:63.6px;top:135px;width:222.9px;height:5px;background:rgba(90,90,90,.28)"></div><div class="a" style="left:63.6px;top:142px;width:222.9px;height:5px;background:rgba(90,90,90,.28)"></div><div class="a" style="left:63.6px;top:149px;width:6.399999999999999px;height:5px;background:rgba(90,90,90,.28)"></div><div class="a" style="left:63.6px;top:195px;width:152.3px;height:5px;background:rgba(90,90,90,.28)"></div><div class="a" style="left:63.6px;top:208.5px;width:222.9px;height:5px;background:rgba(90,90,90,.28)"></div><div class="a" style="left:63.6px;top:217px;width:20.699999999999996px;height:5px;background:rgba(90,90,90,.28)"></div><div class="a" style="left:63.6px;top:228px;width:222.9px;height:5px;background:rgba(90,90,90,.28)"></div></div>
<div class="a card" style="left:1448px;top:443px;width:350px;height:717px"></div>
<div class="a img" style="left:1458px;top:454px;width:330px;height:624px"><div class="a" style="left:26px;top:0;width:280px;height:624px;background:#f7f7f7"></div><div class="a" style="left:11px;top:0;width:2.5px;height:624px;background:#3d3d3d"></div><div class="a" style="left:26px;top:0;width:0;height:624px;border-left:1.5px dashed #4cc98a"></div><div class="a" style="left:305px;top:0;width:0;height:624px;border-left:1.5px dashed #4cc98a"></div><div class="a" style="left:38.5px;top:0;width:2px;height:624px;background:#8d8d8d"></div><div class="a" style="left:55.0px;top:0px;width:2px;height:71px;background:#a0a0a0"></div><div class="a" style="left:70.0px;top:0px;width:2px;height:31px;background:#a8a8a8"></div><div class="a" style="left:91px;top:-3px;width:168px;height:22px;background:#fff"></div><div class="a" style="left:97px;top:0.0px;width:158px;height:2.6px;background:rgba(85,85,85,.42)"></div><div class="a" style="left:97px;top:7.8px;width:158px;height:2.6px;background:rgba(85,85,85,.42)"></div><div class="a" style="left:97px;top:15.6px;width:87px;height:2.6px;background:rgba(85,85,85,.42)"></div><div class="a" style="left:86.0px;top:-4px;width:2px;height:25px;background:#b0b0b0"></div><div class="a" style="left:87px;top:19.0px;width:171px;height:2px;background:#b8b8b8"></div><div class="a" style="left:75px;top:26.5px;width:67px;height:3px;background:rgba(95,95,95,.3)"></div><div class="a" style="left:71px;top:30.0px;width:74px;height:2px;background:#b4b4b4"></div><div class="a" style="left:91px;top:34.5px;width:168px;height:23.5px;background:#fff"></div><div class="a" style="left:97px;top:37.5px;width:158px;height:2.6px;background:rgba(85,85,85,.42)"></div><div class="a" style="left:97px;top:43.2px;width:158px;height:2.6px;background:rgba(85,85,85,.42)"></div><div class="a" style="left:97px;top:48.9px;width:158px;height:2.6px;background:rgba(85,85,85,.42)"></div><div class="a" style="left:97px;top:54.6px;width:87px;height:2.6px;background:rgba(85,85,85,.42)"></div><div class="a" style="left:86.0px;top:33.5px;width:2px;height:26.5px;background:#b0b0b0"></div><div class="a" style="left:87px;top:58.0px;width:171px;height:2px;background:#b8b8b8"></div><div class="a" style="left:60px;top:65.5px;width:8px;height:3px;background:rgba(95,95,95,.3)"></div><div class="a" style="left:56px;top:69.0px;width:15px;height:2px;background:#b4b4b4"></div><div class="a" style="left:69px;top:74px;width:167px;height:14px;background:#fff"></div><div class="a" style="left:75px;top:77.0px;width:157px;height:2.6px;background:rgba(85,85,85,.42)"></div><div class="a" style="left:75px;top:84.6px;width:86px;height:2.6px;background:rgba(85,85,85,.42)"></div><div class="a" style="left:70.0px;top:73px;width:2px;height:17px;background:#b0b0b0"></div><div class="a" style="left:71px;top:88.0px;width:164px;height:2px;background:#b8b8b8"></div><div class="a" style="left:58px;top:93.5px;width:26px;height:3px;background:rgba(95,95,95,.3)"></div><div class="a" style="left:39.5px;top:97.0px;width:47.5px;height:2px;background:#b4b4b4"></div><div class="a" style="left:46.5px;top:91px;width:8px;height:8px;border-radius:50%;background:#f5a623"></div><div class="a" style="left:55.0px;top:103px;width:2px;height:179px;background:#5a5a5a"></div><div class="a" style="left:62px;top:105.5px;width:33px;height:3px;background:rgba(95,95,95,.3)"></div><div class="a" style="left:56px;top:109.0px;width:42px;height:2px;background:#b4b4b4"></div><div class="a" style="left:76px;top:113px;width:167px;height:30px;background:#fff"></div><div class="a" style="left:82px;top:116.0px;width:157px;height:2.6px;background:rgba(85,85,85,.42)"></div><div class="a" style="left:82px;top:121.9px;width:157px;height:2.6px;background:rgba(85,85,85,.42)"></div><div class="a" style="left:82px;top:127.8px;width:157px;height:2.6px;background:rgba(85,85,85,.42)"></div><div class="a" style="left:82px;top:133.7px;width:157px;height:2.6px;background:rgba(85,85,85,.42)"></div><div class="a" style="left:82px;top:139.6px;width:86px;height:2.6px;background:rgba(85,85,85,.42)"></div><div class="a" style="left:70.0px;top:112px;width:2px;height:33px;background:#b0b0b0"></div><div class="a" style="left:71px;top:143.0px;width:171px;height:2px;background:#b8b8b8"></div><div class="a" style="left:62px;top:151.1px;width:48px;height:3px;background:rgba(95,95,95,.3)"></div><div class="a" style="left:56px;top:154.6px;width:57px;height:2px;background:#b4b4b4"></div><div class="a" style="left:76px;top:159px;width:167px;height:23.599999999999994px;background:#fff"></div><div class="a" style="left:82px;top:162.0px;width:157px;height:2.6px;background:rgba(85,85,85,.42)"></div><div class="a" style="left:82px;top:167.7px;width:157px;height:2.6px;background:rgba(85,85,85,.42)"></div><div class="a" style="left:82px;top:173.5px;width:157px;height:2.6px;background:rgba(85,85,85,.42)"></div><div class="a" style="left:82px;top:179.2px;width:86px;height:2.6px;background:rgba(85,85,85,.42)"></div><div class="a" style="left:70.0px;top:158px;width:2px;height:26.599999999999994px;background:#b0b0b0"></div><div class="a" style="left:71px;top:182.6px;width:171px;height:2px;background:#b8b8b8"></div><div class="a" style="left:62px;top:190.2px;width:58px;height:3px;background:rgba(95,95,95,.3)"></div><div class="a" style="left:56px;top:193.7px;width:67px;height:2px;background:#b4b4b4"></div><div class="a" style="left:76px;top:198px;width:167px;height:25px;background:#fff"></div><div class="a" style="left:82px;top:201.0px;width:157px;height:2.6px;background:rgba(85,85,85,.42)"></div><div class="a" style="left:82px;top:207.2px;width:157px;height:2.6px;background:rgba(85,85,85,.42)"></div><div class="a" style="left:82px;top:213.4px;width:157px;height:2.6px;background:rgba(85,85,85,.42)"></div><div class="a" style="left:82px;top:219.6px;width:86px;height:2.6px;background:rgba(85,85,85,.42)"></div><div class="a" style="left:70.0px;top:197px;width:2px;height:28px;background:#b0b0b0"></div><div class="a" style="left:71px;top:223.0px;width:171px;height:2px;background:#b8b8b8"></div><div class="a" style="left:62px;top:229.5px;width:70px;height:3px;background:rgba(95,95,95,.3)"></div><div class="a" style="left:56px;top:233.0px;width:79px;height:2px;background:#b4b4b4"></div><div class="a" style="left:76px;top:238px;width:167px;height:31.5px;background:#fff"></div><div class="a" style="left:82px;top:241.0px;width:157px;height:2.6px;background:rgba(85,85,85,.42)"></div><div class="a" style="left:82px;top:247.3px;width:157px;height:2.6px;background:rgba(85,85,85,.42)"></div><div class="a" style="left:82px;top:253.6px;width:157px;height:2.6px;background:rgba(85,85,85,.42)"></div><div class="a" style="left:82px;top:259.8px;width:157px;height:2.6px;background:rgba(85,85,85,.42)"></div><div class="a" style="left:82px;top:266.1px;width:86px;height:2.6px;background:rgba(85,85,85,.42)"></div><div class="a" style="left:70.0px;top:237px;width:2px;height:34.5px;background:#b0b0b0"></div><div class="a" style="left:71px;top:269.5px;width:171px;height:2px;background:#b8b8b8"></div><div class="a" style="left:62px;top:276.2px;width:20px;height:3px;background:rgba(95,95,95,.3)"></div><div class="a" style="left:56px;top:279.7px;width:29px;height:2px;background:#b4b4b4"></div><div class="a" style="left:76px;top:284px;width:167px;height:19px;background:#fff"></div><div class="a" style="left:82px;top:287.0px;width:157px;height:2.6px;background:rgba(85,85,85,.42)"></div><div class="a" style="left:82px;top:293.3px;width:157px;height:2.6px;background:rgba(85,85,85,.42)"></div><div class="a" style="left:82px;top:299.6px;width:86px;height:2.6px;background:rgba(85,85,85,.42)"></div><div class="a" style="left:70.0px;top:283px;width:2px;height:22px;background:#b0b0b0"></div><div class="a" style="left:71px;top:303.0px;width:171px;height:2px;background:#b8b8b8"></div><div class="a" style="left:58px;top:309.5px;width:34px;height:3px;background:rgba(95,95,95,.3)"></div><div class="a" style="left:39.5px;top:313.0px;width:55.5px;height:2px;background:#b4b4b4"></div><div class="a" style="left:46.5px;top:306.7px;width:8px;height:8px;border-radius:50%;background:#35c28a"></div><div class="a" style="left:55.0px;top:318px;width:2px;height:174px;background:#9a9a9a"></div><div class="a" style="left:63.599999999999994px;top:317.6px;width:8px;height:8px;border-radius:50%;background:#e8392a"></div><div class="a" style="left:56px;top:322.0px;width:8px;height:2px;background:#b4b4b4"></div><div class="a" style="left:74px;top:327px;width:168px;height:15px;background:#fff"></div><div class="a" style="left:80px;top:330.0px;width:158px;height:2.6px;background:rgba(85,85,85,.42)"></div><div class="a" style="left:80px;top:338.6px;width:87px;height:2.6px;background:rgba(85,85,85,.42)"></div><div class="a" style="left:70.0px;top:326px;width:2px;height:18px;background:#b0b0b0"></div><div class="a" style="left:71px;top:342.0px;width:170px;height:2px;background:#b8b8b8"></div><div class="a" style="left:63.599999999999994px;top:346px;width:8px;height:8px;border-radius:50%;background:#f5821f"></div><div class="a" style="left:56px;top:352.0px;width:8px;height:2px;background:#b4b4b4"></div><div class="a" style="left:72.0px;top:358px;width:2px;height:95px;background:#666"></div><div class="a" style="left:78px;top:359.5px;width:29px;height:3px;background:rgba(95,95,95,.3)"></div><div class="a" style="left:73px;top:363.0px;width:37px;height:2px;background:#b4b4b4"></div><div class="a" style="left:92px;top:368px;width:168px;height:13px;background:#fff"></div><div class="a" style="left:98px;top:371.0px;width:158px;height:2.6px;background:rgba(85,85,85,.42)"></div><div class="a" style="left:98px;top:377.6px;width:87px;height:2.6px;background:rgba(85,85,85,.42)"></div><div class="a" style="left:86.0px;top:367px;width:2px;height:16px;background:#b0b0b0"></div><div class="a" style="left:87px;top:381.0px;width:172px;height:2px;background:#b8b8b8"></div><div class="a" style="left:78px;top:388.5px;width:34px;height:3px;background:rgba(95,95,95,.3)"></div><div class="a" style="left:73px;top:392.0px;width:42px;height:2px;background:#b4b4b4"></div><div class="a" style="left:92px;top:396px;width:168px;height:18px;background:#fff"></div><div class="a" style="left:98px;top:399.0px;width:158px;height:2.6px;background:rgba(85,85,85,.42)"></div><div class="a" style="left:98px;top:404.8px;width:158px;height:2.6px;background:rgba(85,85,85,.42)"></div><div class="a" style="left:98px;top:410.6px;width:87px;height:2.6px;background:rgba(85,85,85,.42)"></div><div class="a" style="left:86.0px;top:395px;width:2px;height:21px;background:#b0b0b0"></div><div class="a" style="left:87px;top:414.0px;width:172px;height:2px;background:#b8b8b8"></div><div class="a" style="left:78px;top:421.0px;width:40px;height:3px;background:rgba(95,95,95,.3)"></div><div class="a" style="left:73px;top:424.5px;width:48px;height:2px;background:#b4b4b4"></div><div class="a" style="left:92px;top:429px;width:168px;height:12px;background:#fff"></div><div class="a" style="left:98px;top:432.0px;width:158px;height:2.6px;background:rgba(85,85,85,.42)"></div><div class="a" style="left:98px;top:437.6px;width:87px;height:2.6px;background:rgba(85,85,85,.42)"></div><div class="a" style="left:86.0px;top:428px;width:2px;height:15px;background:#b0b0b0"></div><div class="a" style="left:87px;top:441.0px;width:172px;height:2px;background:#b8b8b8"></div><div class="a" style="left:78px;top:448.5px;width:34px;height:3px;background:rgba(95,95,95,.3)"></div><div class="a" style="left:73px;top:452.0px;width:42px;height:2px;background:#b4b4b4"></div><div class="a" style="left:92px;top:456.6px;width:168px;height:12.099999999999966px;background:#fff"></div><div class="a" style="left:98px;top:459.6px;width:158px;height:2.6px;background:rgba(85,85,85,.42)"></div><div class="a" style="left:98px;top:465.3px;width:87px;height:2.6px;background:rgba(85,85,85,.42)"></div><div class="a" style="left:86.0px;top:455.6px;width:2px;height:15.099999999999966px;background:#b0b0b0"></div><div class="a" style="left:87px;top:468.7px;width:172px;height:2px;background:#b8b8b8"></div><div class="a" style="left:58px;top:475.5px;width:26px;height:3px;background:rgba(95,95,95,.3)"></div><div class="a" style="left:39.5px;top:479.0px;width:47.5px;height:2px;background:#b4b4b4"></div><div class="a" style="left:46.8px;top:473.4px;width:8px;height:8px;border-radius:50%;background:#18a6ea"></div><div class="a" style="left:63.5px;top:485.3px;width:8px;height:8px;border-radius:50%;background:#e8392a"></div><div class="a" style="left:56px;top:491.0px;width:8px;height:2px;background:#b4b4b4"></div><div class="a" style="left:74px;top:495px;width:168px;height:19px;background:#fff"></div><div class="a" style="left:80px;top:498.0px;width:158px;height:2.6px;background:rgba(85,85,85,.42)"></div><div class="a" style="left:80px;top:504.3px;width:158px;height:2.6px;background:rgba(85,85,85,.42)"></div><div class="a" style="left:80px;top:510.6px;width:87px;height:2.6px;background:rgba(85,85,85,.42)"></div><div class="a" style="left:70.0px;top:494px;width:2px;height:22px;background:#b0b0b0"></div><div class="a" style="left:71px;top:514.0px;width:170px;height:2px;background:#b8b8b8"></div><div class="a" style="left:63.5px;top:518.6px;width:8px;height:8px;border-radius:50%;background:#f5821f"></div><div class="a" style="left:56px;top:524.8px;width:8px;height:2px;background:#b4b4b4"></div><div class="a" style="left:72.0px;top:530px;width:2px;height:94px;background:#666"></div><div class="a" style="left:78px;top:532.5px;width:29px;height:3px;background:rgba(95,95,95,.3)"></div><div class="a" style="left:73px;top:536.0px;width:37px;height:2px;background:#b4b4b4"></div><div class="a" style="left:92px;top:540.6px;width:168px;height:18.399999999999977px;background:#fff"></div><div class="a" style="left:98px;top:543.6px;width:158px;height:2.6px;background:rgba(85,85,85,.42)"></div><div class="a" style="left:98px;top:549.6px;width:158px;height:2.6px;background:rgba(85,85,85,.42)"></div><div class="a" style="left:98px;top:555.6px;width:87px;height:2.6px;background:rgba(85,85,85,.42)"></div><div class="a" style="left:86.0px;top:539.6px;width:2px;height:21.399999999999977px;background:#b0b0b0"></div><div class="a" style="left:87px;top:559.0px;width:172px;height:2px;background:#b8b8b8"></div><div class="a" style="left:78px;top:566.3px;width:49px;height:3px;background:rgba(95,95,95,.3)"></div><div class="a" style="left:73px;top:569.8px;width:57px;height:2px;background:#b4b4b4"></div><div class="a" style="left:92px;top:573.8px;width:168px;height:12.700000000000045px;background:#fff"></div><div class="a" style="left:98px;top:576.8px;width:158px;height:2.6px;background:rgba(85,85,85,.42)"></div><div class="a" style="left:98px;top:583.1px;width:87px;height:2.6px;background:rgba(85,85,85,.42)"></div><div class="a" style="left:86.0px;top:572.8px;width:2px;height:15.700000000000045px;background:#b0b0b0"></div><div class="a" style="left:87px;top:586.5px;width:172px;height:2px;background:#b8b8b8"></div><div class="a" style="left:78px;top:593.7px;width:29px;height:3px;background:rgba(95,95,95,.3)"></div><div class="a" style="left:73px;top:597.2px;width:37px;height:2px;background:#b4b4b4"></div><div class="a" style="left:92px;top:602px;width:168px;height:29px;background:#fff"></div><div class="a" style="left:98px;top:605.0px;width:158px;height:2.6px;background:rgba(85,85,85,.42)"></div><div class="a" style="left:98px;top:612.5px;width:158px;height:2.6px;background:rgba(85,85,85,.42)"></div><div class="a" style="left:98px;top:620.1px;width:158px;height:2.6px;background:rgba(85,85,85,.42)"></div><div class="a" style="left:98px;top:627.6px;width:87px;height:2.6px;background:rgba(85,85,85,.42)"></div><div class="a" style="left:86.0px;top:601px;width:2px;height:32px;background:#b0b0b0"></div><div class="a" style="left:87px;top:631.0px;width:172px;height:2px;background:#b8b8b8"></div></div>
<div class="t ctitle" style="left: 1462px; top: 1114px; --w: 98px; transform-origin: 0px 0px; transform: scaleX(0.98);">人件費管理</div>
<svg style="left:1478px;top:440px" width="43" height="42"><defs><linearGradient id="hg1482" x1="0" y1="0" x2="1" y2="1"><stop offset="0" stop-color="#ff6a58"></stop><stop offset="1" stop-color="#ff2585"></stop></linearGradient></defs><path d="M0 5 L4 0 V5z M39 0 L43 5 H39z" fill="#a8402e"></path><path d="M4 0 H39 V42 L21.5 35 L4 42z" fill="url(#hg1482)"></path><text x="21.5" y="24.5" font-size="21.5" fill="#fff" stroke="#fff" stroke-width=".5" text-anchor="middle" font-family="Liberation Sans">hot</text></svg>
<div class="a" style="left:1783px;top:895px;width:95px;height:182px;border-radius:11px;background:#f4f4f4"></div>
<div class="a" style="left:1783px;top:979px;width:95px;height:1px;background:#dcdcdc"></div>
<svg style="left:1822px;top:905px" width="17" height="16"><path d="M8.5 1 L10.7 5.8 L16 6.3 L12 9.8 L13.2 15 L8.5 12.3 L3.8 15 L5 9.8 L1 6.3 L6.3 5.8z" fill="none" stroke="#777" stroke-width="1.2" stroke-linejoin="round"></path></svg>
<div class="t" style="left: 1793px; top: 932px; font-size: 15px; color: rgb(17, 17, 17); --w: 73px; transform-origin: 0px 0px; transform: scaleX(0.973333);">私のコレク</div>
<div class="t" style="left: 1812px; top: 950px; font-size: 15px; color: rgb(17, 17, 17); --w: 37px; transform-origin: 0px 0px; transform: scaleX(0.822222);">ション</div>
<svg style="left:1822px;top:997px" width="18" height="19"><path d="M1 1 H17 M9 4 V19 M2 11 L9 4 L16 11" fill="none" stroke="#777" stroke-width="1.6"></path></svg>
<div class="t" style="left: 1796px; top: 1030px; font-size: 15px; color: rgb(17, 17, 17); --w: 72px; transform-origin: 0px 0px; transform: scaleX(0.96);">トップへ戻</div>
<div class="t" style="left: 1824px; top: 1049px; font-size: 15px; color: rgb(17, 17, 17); --w: 13px; transform-origin: 0px 0px; transform: scaleX(0.866667);">る</div>
<!--/CARDS-->
<!-- scrollbar -->
<div class="a" style="left:1883px;top:145px;width:9px;height:266px;border-radius:5px;background:#d3d3d3"></div>

<script>
(function(){var els=document.querySelectorAll('.t');for(var i=0;i<els.length;i++){var el=els[i];var w=parseFloat(getComputedStyle(el).getPropertyValue('--w'));if(!w)continue;var n=el.offsetWidth;if(n>0){el.style.transformOrigin='0 0';el.style.transform='scaleX('+(w/n)+')';}}})();
</script>

</body></html>
